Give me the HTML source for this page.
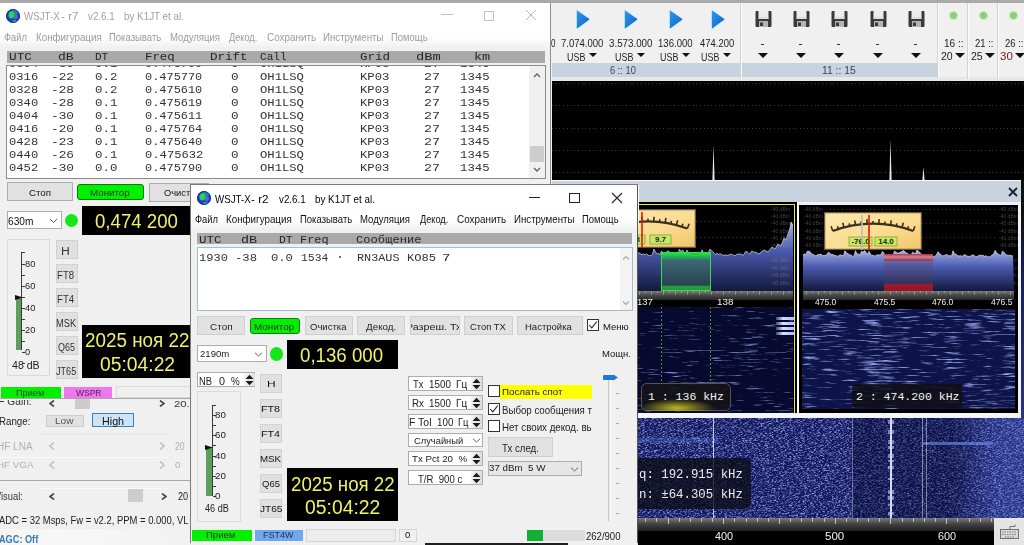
<!DOCTYPE html>
<html><head><meta charset="utf-8"><style>*{box-sizing:border-box;margin:0;padding:0}
html,body{width:1024px;height:545px;overflow:hidden;background:#f0f0f0}
body{font-family:"Liberation Sans",sans-serif;font-size:11px;color:#000}
.a{position:absolute}
.t{position:absolute;white-space:nowrap;line-height:1}
#root{position:relative;width:1024px;height:545px;overflow:hidden;background:#f0f0f0}
.tri{display:inline-block;width:0;height:0;border-left:5px solid transparent;border-right:5px solid transparent;border-top:6px solid #111;vertical-align:middle;margin-left:4px;position:relative;top:-1px}
.btn{position:absolute;background:#e1e1e1;border:1px solid #adadad;text-align:center;color:#000;white-space:nowrap;overflow:hidden}
</style></head><body><div id="root">
<div class="a" style="left:0px;top:0px;width:1024px;height:3px;background:#a9a9a9"></div>
<div class="a" style="left:552px;top:63px;width:188px;height:14px;background:#c7d3df"></div>
<div class="a" style="left:741px;top:63px;width:196px;height:14px;background:#c7d3df"></div>
<div class="a" style="left:552px;top:77px;width:472px;height:4px;background:#e8e8e8"></div>
<div class="a" style="left:740px;top:3px;width:1px;height:76px;background:#d2d2d2"></div>
<div class="a" style="left:741px;top:3px;width:1px;height:76px;background:#fbfbfb"></div>
<div class="a" style="left:937px;top:3px;width:1px;height:76px;background:#d2d2d2"></div>
<div class="a" style="left:938px;top:3px;width:1px;height:76px;background:#fbfbfb"></div>
<div class="a" style="left:967px;top:3px;width:1px;height:76px;background:#d2d2d2"></div>
<div class="a" style="left:968px;top:3px;width:1px;height:76px;background:#fbfbfb"></div>
<div class="a" style="left:997px;top:3px;width:1px;height:76px;background:#d2d2d2"></div>
<div class="a" style="left:998px;top:3px;width:1px;height:76px;background:#fbfbfb"></div>
<div class="t" style="left:610.00px;top:66px;font-size:10.0px;color:#3a4450;transform:scaleX(0.9286);transform-origin:0 0;">6 :: 10</div>
<div class="t" style="left:821.97px;top:66px;font-size:10.0px;color:#3a4450;transform:scaleX(1.0323);transform-origin:0 0;">11 :: 15</div>
<svg class="a" style="left:575px;top:9px" width="16" height="21" viewBox="0 0 16 21"><defs><linearGradient id="pg" x1="0" y1="0" x2="1" y2="1"><stop offset="0" stop-color="#2f9af0"/><stop offset="1" stop-color="#0a62c0"/></linearGradient></defs><path d="M1.5 2Q1.5 0.8 2.6 1.4L14.2 9.6Q15.2 10.3 14.2 11L2.6 19.6Q1.5 20.2 1.5 19z" fill="url(#pg)" stroke="#d8f4ff" stroke-width="0.6"/></svg>
<svg class="a" style="left:623px;top:9px" width="16" height="21" viewBox="0 0 16 21"><defs><linearGradient id="pg" x1="0" y1="0" x2="1" y2="1"><stop offset="0" stop-color="#2f9af0"/><stop offset="1" stop-color="#0a62c0"/></linearGradient></defs><path d="M1.5 2Q1.5 0.8 2.6 1.4L14.2 9.6Q15.2 10.3 14.2 11L2.6 19.6Q1.5 20.2 1.5 19z" fill="url(#pg)" stroke="#d8f4ff" stroke-width="0.6"/></svg>
<svg class="a" style="left:668px;top:9px" width="16" height="21" viewBox="0 0 16 21"><defs><linearGradient id="pg" x1="0" y1="0" x2="1" y2="1"><stop offset="0" stop-color="#2f9af0"/><stop offset="1" stop-color="#0a62c0"/></linearGradient></defs><path d="M1.5 2Q1.5 0.8 2.6 1.4L14.2 9.6Q15.2 10.3 14.2 11L2.6 19.6Q1.5 20.2 1.5 19z" fill="url(#pg)" stroke="#d8f4ff" stroke-width="0.6"/></svg>
<svg class="a" style="left:710px;top:9px" width="16" height="21" viewBox="0 0 16 21"><defs><linearGradient id="pg" x1="0" y1="0" x2="1" y2="1"><stop offset="0" stop-color="#2f9af0"/><stop offset="1" stop-color="#0a62c0"/></linearGradient></defs><path d="M1.5 2Q1.5 0.8 2.6 1.4L14.2 9.6Q15.2 10.3 14.2 11L2.6 19.6Q1.5 20.2 1.5 19z" fill="url(#pg)" stroke="#d8f4ff" stroke-width="0.6"/></svg>
<div class="t" style="left:551.00px;top:39px;font-size:10.0px;color:#1e1e1e;transform:scaleX(0.8000);transform-origin:0 0;">0</div>
<div class="t" style="left:561.05px;top:39px;font-size:10.0px;color:#1e1e1e;transform:scaleX(0.9535);transform-origin:0 0;">7.074.000</div>
<div class="t" style="left:609.02px;top:39px;font-size:10.0px;color:#1e1e1e;transform:scaleX(0.9767);transform-origin:0 0;">3.573.000</div>
<div class="t" style="left:658.04px;top:39px;font-size:10.0px;color:#1e1e1e;transform:scaleX(0.9571);transform-origin:0 0;">136.000</div>
<div class="t" style="left:700.00px;top:39px;font-size:10.0px;color:#1e1e1e;transform:scaleX(0.9444);transform-origin:0 0;">474.200</div>
<div class="t" style="left:567.15px;top:52px;font-size:10.5px;color:#1e1e1e;transform:scaleX(0.8500);transform-origin:0 0;">USB</div>
<div class="a" style="left:588.5px;top:53px;width:0px;height:0px;border-left:4.5px solid transparent;border-right:4.5px solid transparent;border-top:4.5px solid #111"></div>
<div class="t" style="left:615.15px;top:52px;font-size:10.5px;color:#1e1e1e;transform:scaleX(0.8500);transform-origin:0 0;">USB</div>
<div class="a" style="left:636.5px;top:53px;width:0px;height:0px;border-left:4.5px solid transparent;border-right:4.5px solid transparent;border-top:4.5px solid #111"></div>
<div class="t" style="left:660.15px;top:52px;font-size:10.5px;color:#1e1e1e;transform:scaleX(0.8500);transform-origin:0 0;">USB</div>
<div class="a" style="left:681.5px;top:53px;width:0px;height:0px;border-left:4.5px solid transparent;border-right:4.5px solid transparent;border-top:4.5px solid #111"></div>
<div class="t" style="left:701.15px;top:52px;font-size:10.5px;color:#1e1e1e;transform:scaleX(0.8500);transform-origin:0 0;">USB</div>
<div class="a" style="left:722.5px;top:53px;width:0px;height:0px;border-left:4.5px solid transparent;border-right:4.5px solid transparent;border-top:4.5px solid #111"></div>
<svg class="a" style="left:755px;top:10px" width="17" height="17" viewBox="0 0 17 17"><rect x="0.5" y="1" width="16" height="16" rx="1" fill="#3a3a3a"/><rect x="3.5" y="1" width="10" height="8" fill="#ececf2"/><rect x="3.5" y="7" width="10" height="1.5" fill="#d8d8e0"/><rect x="4" y="11" width="9" height="6" fill="#b4b4b4"/><rect x="5" y="12.5" width="3" height="3.5" fill="#3a3a3a"/></svg>
<div class="a" style="left:761px;top:44px;width:3px;height:1px;background:#333"></div>
<div class="a" style="left:758px;top:53px;width:0px;height:0px;border-left:5px solid transparent;border-right:5px solid transparent;border-top:5px solid #111"></div>
<svg class="a" style="left:793px;top:10px" width="17" height="17" viewBox="0 0 17 17"><rect x="0.5" y="1" width="16" height="16" rx="1" fill="#3a3a3a"/><rect x="3.5" y="1" width="10" height="8" fill="#ececf2"/><rect x="3.5" y="7" width="10" height="1.5" fill="#d8d8e0"/><rect x="4" y="11" width="9" height="6" fill="#b4b4b4"/><rect x="5" y="12.5" width="3" height="3.5" fill="#3a3a3a"/></svg>
<div class="a" style="left:799px;top:44px;width:3px;height:1px;background:#333"></div>
<div class="a" style="left:796px;top:53px;width:0px;height:0px;border-left:5px solid transparent;border-right:5px solid transparent;border-top:5px solid #111"></div>
<svg class="a" style="left:831px;top:10px" width="17" height="17" viewBox="0 0 17 17"><rect x="0.5" y="1" width="16" height="16" rx="1" fill="#3a3a3a"/><rect x="3.5" y="1" width="10" height="8" fill="#ececf2"/><rect x="3.5" y="7" width="10" height="1.5" fill="#d8d8e0"/><rect x="4" y="11" width="9" height="6" fill="#b4b4b4"/><rect x="5" y="12.5" width="3" height="3.5" fill="#3a3a3a"/></svg>
<div class="a" style="left:837px;top:44px;width:3px;height:1px;background:#333"></div>
<div class="a" style="left:834px;top:53px;width:0px;height:0px;border-left:5px solid transparent;border-right:5px solid transparent;border-top:5px solid #111"></div>
<svg class="a" style="left:870px;top:10px" width="17" height="17" viewBox="0 0 17 17"><rect x="0.5" y="1" width="16" height="16" rx="1" fill="#3a3a3a"/><rect x="3.5" y="1" width="10" height="8" fill="#ececf2"/><rect x="3.5" y="7" width="10" height="1.5" fill="#d8d8e0"/><rect x="4" y="11" width="9" height="6" fill="#b4b4b4"/><rect x="5" y="12.5" width="3" height="3.5" fill="#3a3a3a"/></svg>
<div class="a" style="left:876px;top:44px;width:3px;height:1px;background:#333"></div>
<div class="a" style="left:873px;top:53px;width:0px;height:0px;border-left:5px solid transparent;border-right:5px solid transparent;border-top:5px solid #111"></div>
<svg class="a" style="left:908px;top:10px" width="17" height="17" viewBox="0 0 17 17"><rect x="0.5" y="1" width="16" height="16" rx="1" fill="#3a3a3a"/><rect x="3.5" y="1" width="10" height="8" fill="#ececf2"/><rect x="3.5" y="7" width="10" height="1.5" fill="#d8d8e0"/><rect x="4" y="11" width="9" height="6" fill="#b4b4b4"/><rect x="5" y="12.5" width="3" height="3.5" fill="#3a3a3a"/></svg>
<div class="a" style="left:914px;top:44px;width:3px;height:1px;background:#333"></div>
<div class="a" style="left:911px;top:53px;width:0px;height:0px;border-left:5px solid transparent;border-right:5px solid transparent;border-top:5px solid #111"></div>
<div class="a" style="left:949px;top:11px;width:9px;height:9px;border-radius:50%;background:#8fcf70;border:1px solid #c9e8b8"></div>
<div class="t" style="left:944.00px;top:39px;font-size:10.0px;color:#222;transform:scaleX(1.0010);transform-origin:0 0;">16 ::</div>
<div class="t" style="left:941.00px;top:51px;font-size:10.5px;color:#222;transform:scaleX(1.0010);transform-origin:0 0;">20</div>
<div class="a" style="left:955px;top:53px;width:0px;height:0px;border-left:5px solid transparent;border-right:5px solid transparent;border-top:5px solid #111"></div>
<div class="a" style="left:979px;top:11px;width:9px;height:9px;border-radius:50%;background:#8fcf70;border:1px solid #c9e8b8"></div>
<div class="t" style="left:975.00px;top:39px;font-size:10.0px;color:#222;transform:scaleX(0.9474);transform-origin:0 0;">21 ::</div>
<div class="t" style="left:971.00px;top:51px;font-size:10.5px;color:#222;transform:scaleX(1.0010);transform-origin:0 0;">25</div>
<div class="a" style="left:985px;top:53px;width:0px;height:0px;border-left:5px solid transparent;border-right:5px solid transparent;border-top:5px solid #111"></div>
<div class="a" style="left:1009px;top:11px;width:9px;height:9px;border-radius:50%;background:#8fcf70;border:1px solid #c9e8b8"></div>
<div class="t" style="left:1005.00px;top:39px;font-size:10.0px;color:#222;transform:scaleX(0.9474);transform-origin:0 0;">26 ::</div>
<div class="t" style="left:999.90px;top:51px;font-size:10.5px;color:#7a2020;transform:scaleX(1.1000);transform-origin:0 0;">30</div>
<div class="a" style="left:1015px;top:53px;width:0px;height:0px;border-left:5px solid transparent;border-right:5px solid transparent;border-top:5px solid #111"></div>
<div class="a" style="left:552px;top:81px;width:472px;height:99px;background:#000"></div>
<div class="a" style="left:552px;top:83px;width:472px;height:1px;background:repeating-linear-gradient(90deg,#3a3a3a 0 1px,transparent 1px 3.7px)"></div>
<div class="a" style="left:552px;top:105px;width:472px;height:1px;background:repeating-linear-gradient(90deg,#3a3a3a 0 1px,transparent 1px 3.7px)"></div>
<div class="a" style="left:552px;top:128px;width:472px;height:1px;background:repeating-linear-gradient(90deg,#3a3a3a 0 1px,transparent 1px 3.7px)"></div>
<div class="a" style="left:552px;top:150px;width:472px;height:1px;background:repeating-linear-gradient(90deg,#3a3a3a 0 1px,transparent 1px 3.7px)"></div>
<div class="a" style="left:552px;top:172px;width:472px;height:1px;background:repeating-linear-gradient(90deg,#3a3a3a 0 1px,transparent 1px 3.7px)"></div>
<svg class="a" style="left:711px;top:144px" width="5" height="36"><path d="M2.5 0L3.6 36H1.4z" fill="#e8e8e8"/></svg>
<svg class="a" style="left:888px;top:139px" width="5" height="41"><path d="M2.5 0L3.6 41H1.4z" fill="#e8e8e8"/></svg>
<svg class="a" style="left:921px;top:167px" width="5" height="13"><path d="M2.5 0L3.6 13H1.4z" fill="#e8e8e8"/></svg>
<svg class="a" style="left:552px;top:180px" width="472" height="338"><defs><filter id="wn" x="0" y="0" width="100%" height="100%"><feTurbulence type="fractalNoise" baseFrequency="0.45 1.4" numOctaves="3" seed="3"/><feColorMatrix values="0 0 0 0 0.3  0 0 0 0 0.37  0 0 0 0 0.86  2.4 0 0 0 -1.02"/></filter><linearGradient id="wgx" x1="0" y1="0" x2="1" y2="0"><stop offset="0" stop-color="#050830" stop-opacity="0"/><stop offset="0.63" stop-color="#050830" stop-opacity="0"/><stop offset="0.64" stop-color="#050830" stop-opacity="0.4"/><stop offset="0.86" stop-color="#050830" stop-opacity="0.4"/><stop offset="0.93" stop-color="#050830" stop-opacity="0"/><stop offset="1" stop-color="#050830" stop-opacity="0"/></linearGradient><linearGradient id="wgr" x1="0" y1="0" x2="1" y2="0"><stop offset="0.84" stop-color="#5a74e0" stop-opacity="0"/><stop offset="0.95" stop-color="#5a74e0" stop-opacity="0.3"/><stop offset="1" stop-color="#5a74e0" stop-opacity="0.35"/></linearGradient></defs><rect width="472" height="338" fill="#10175a"/><rect width="472" height="338" filter="url(#wn)"/><rect width="472" height="338" fill="url(#wgx)"/><rect width="472" height="338" fill="url(#wgr)"/><rect x="86" y="258" width="80" height="5" fill="#6080e0" opacity="0.3"/><rect x="371" y="262" width="70" height="3" fill="#7a98f8" opacity="0.55"/></svg>
<div class="a" style="left:713px;top:180px;width:1px;height:338px;background:rgba(235,240,255,0.8)"></div>
<div class="a" style="left:852px;top:180px;width:1px;height:338px;background:rgba(235,240,255,0.35)"></div>
<div class="a" style="left:890px;top:180px;width:2px;height:338px;background:rgba(235,240,255,0.9)"></div>
<div class="a" style="left:922px;top:180px;width:1px;height:338px;background:rgba(235,240,255,0.5)"></div>
<div class="a" style="left:926px;top:180px;width:1px;height:338px;background:rgba(235,240,255,0.45)"></div>
<div class="a" style="left:888px;top:420px;width:6px;height:4px;background:rgba(200,215,255,0.55)"></div>
<div class="a" style="left:888px;top:430px;width:6px;height:4px;background:rgba(200,215,255,0.55)"></div>
<div class="a" style="left:888px;top:440px;width:6px;height:4px;background:rgba(200,215,255,0.55)"></div>
<div class="a" style="left:888px;top:446px;width:6px;height:3px;background:rgba(200,215,255,0.55)"></div>
<div class="a" style="left:888px;top:454px;width:6px;height:4px;background:rgba(200,215,255,0.55)"></div>
<div class="a" style="left:888px;top:460px;width:6px;height:2px;background:rgba(200,215,255,0.55)"></div>
<div class="a" style="left:888px;top:466px;width:6px;height:3px;background:rgba(200,215,255,0.55)"></div>
<div class="a" style="left:888px;top:478px;width:6px;height:2px;background:rgba(200,215,255,0.55)"></div>
<div class="a" style="left:888px;top:490px;width:6px;height:4px;background:rgba(200,215,255,0.55)"></div>
<div class="a" style="left:888px;top:496px;width:6px;height:4px;background:rgba(200,215,255,0.55)"></div>
<div class="a" style="left:888px;top:504px;width:6px;height:2px;background:rgba(200,215,255,0.55)"></div>
<div class="a" style="left:888px;top:512px;width:6px;height:3px;background:rgba(200,215,255,0.55)"></div>
<div class="a" style="left:552px;top:518px;width:442px;height:13px;background:linear-gradient(#7a7a7a,#3e3e3e 50%,#222)"></div>
<div class="a" style="left:556px;top:518px;width:1px;height:6px;background:#bdbdbd"></div>
<div class="a" style="left:567px;top:518px;width:1px;height:4px;background:#bdbdbd"></div>
<div class="a" style="left:578px;top:518px;width:1px;height:4px;background:#bdbdbd"></div>
<div class="a" style="left:589px;top:518px;width:1px;height:4px;background:#bdbdbd"></div>
<div class="a" style="left:601px;top:518px;width:1px;height:4px;background:#bdbdbd"></div>
<div class="a" style="left:612px;top:518px;width:1px;height:6px;background:#bdbdbd"></div>
<div class="a" style="left:623px;top:518px;width:1px;height:4px;background:#bdbdbd"></div>
<div class="a" style="left:634px;top:518px;width:1px;height:4px;background:#bdbdbd"></div>
<div class="a" style="left:645px;top:518px;width:1px;height:4px;background:#bdbdbd"></div>
<div class="a" style="left:656px;top:518px;width:1px;height:4px;background:#bdbdbd"></div>
<div class="a" style="left:668px;top:518px;width:1px;height:6px;background:#bdbdbd"></div>
<div class="a" style="left:679px;top:518px;width:1px;height:4px;background:#bdbdbd"></div>
<div class="a" style="left:690px;top:518px;width:1px;height:4px;background:#bdbdbd"></div>
<div class="a" style="left:701px;top:518px;width:1px;height:4px;background:#bdbdbd"></div>
<div class="a" style="left:712px;top:518px;width:1px;height:4px;background:#bdbdbd"></div>
<div class="a" style="left:723px;top:518px;width:1px;height:6px;background:#bdbdbd"></div>
<div class="a" style="left:734px;top:518px;width:1px;height:4px;background:#bdbdbd"></div>
<div class="a" style="left:746px;top:518px;width:1px;height:4px;background:#bdbdbd"></div>
<div class="a" style="left:757px;top:518px;width:1px;height:4px;background:#bdbdbd"></div>
<div class="a" style="left:768px;top:518px;width:1px;height:4px;background:#bdbdbd"></div>
<div class="a" style="left:779px;top:518px;width:1px;height:6px;background:#bdbdbd"></div>
<div class="a" style="left:790px;top:518px;width:1px;height:4px;background:#bdbdbd"></div>
<div class="a" style="left:801px;top:518px;width:1px;height:4px;background:#bdbdbd"></div>
<div class="a" style="left:812px;top:518px;width:1px;height:4px;background:#bdbdbd"></div>
<div class="a" style="left:824px;top:518px;width:1px;height:4px;background:#bdbdbd"></div>
<div class="a" style="left:835px;top:518px;width:1px;height:6px;background:#bdbdbd"></div>
<div class="a" style="left:846px;top:518px;width:1px;height:4px;background:#bdbdbd"></div>
<div class="a" style="left:857px;top:518px;width:1px;height:4px;background:#bdbdbd"></div>
<div class="a" style="left:868px;top:518px;width:1px;height:4px;background:#bdbdbd"></div>
<div class="a" style="left:879px;top:518px;width:1px;height:4px;background:#bdbdbd"></div>
<div class="a" style="left:890px;top:518px;width:1px;height:6px;background:#bdbdbd"></div>
<div class="a" style="left:902px;top:518px;width:1px;height:4px;background:#bdbdbd"></div>
<div class="a" style="left:913px;top:518px;width:1px;height:4px;background:#bdbdbd"></div>
<div class="a" style="left:924px;top:518px;width:1px;height:4px;background:#bdbdbd"></div>
<div class="a" style="left:935px;top:518px;width:1px;height:4px;background:#bdbdbd"></div>
<div class="a" style="left:946px;top:518px;width:1px;height:6px;background:#bdbdbd"></div>
<div class="a" style="left:957px;top:518px;width:1px;height:4px;background:#bdbdbd"></div>
<div class="a" style="left:969px;top:518px;width:1px;height:4px;background:#bdbdbd"></div>
<div class="a" style="left:980px;top:518px;width:1px;height:4px;background:#bdbdbd"></div>
<div class="a" style="left:991px;top:518px;width:1px;height:4px;background:#bdbdbd"></div>
<div class="a" style="left:552px;top:531px;width:442px;height:14px;background:#000"></div>
<div class="t" style="left:715.00px;top:532px;font-size:10.0px;color:#f0f0f0;transform:scaleX(1.0882);transform-origin:0 0;">400</div>
<div class="t" style="left:825.34px;top:532px;font-size:10.0px;color:#f0f0f0;transform:scaleX(1.1562);transform-origin:0 0;">500</div>
<div class="t" style="left:937.50px;top:532px;font-size:10.0px;color:#f0f0f0;transform:scaleX(1.0882);transform-origin:0 0;">600</div>
<div class="a" style="left:994px;top:518px;width:30px;height:27px;background:#e4e4e4"></div>
<svg class="a" style="left:1000px;top:524px" width="19" height="15"><rect x="0.5" y="5.5" width="18" height="9" fill="#d8d8d8" stroke="#707070"/><path d="M2 8h15M2 10.5h15M5 13h9" stroke="#808080" stroke-width="1" stroke-dasharray="1.5 1"/><path d="M10 5V2.5h5V0.5" stroke="#707070" fill="none"/></svg>
<div class="a" style="left:600px;top:458px;width:151px;height:51px;background:rgba(10,12,22,0.78);border-radius:6px"></div>
<div class="t" style="left:638.58px;top:468px;font-size:13.5px;color:#ececec;font-family:'Liberation Mono';transform:scaleX(0.9161);transform-origin:0 0;">q: 192.915 kHz</div>
<div class="t" style="left:638.58px;top:488px;font-size:13.5px;color:#ececec;font-family:'Liberation Mono';transform:scaleX(0.9161);transform-origin:0 0;">n: &plusmn;64.305 kHz</div>
<div class="a" style="left:0px;top:398px;width:190px;height:147px;background:#f0f0f0"></div>
<div class="a" style="left:0;top:400px;width:190px;height:20px;overflow:hidden"><div class="t" style="left:-8.92px;top:-4px;font-size:11.0px;color:#333;transform:scaleX(0.9238);transform-origin:0 0;">HF Gain:</div>
</div>
<svg class="a" style="left:48.5px;top:399.5px" width="6" height="7"><path d="M5 0.5L1 3.5L5 6.5" stroke="#444" stroke-width="1.6" fill="none"/></svg>
<div class="a" style="left:75px;top:398px;width:15px;height:11px;background:#cccccc"></div>
<svg class="a" style="left:159px;top:399.5px" width="6" height="7"><path d="M1 0.5L5 3.5L1 6.5" stroke="#444" stroke-width="1.6" fill="none"/></svg>
<div class="t" style="left:174.40px;top:400px;font-size:9.0px;color:#333;transform:scaleX(1.2571);transform-origin:0 0;">20.:</div>
<div class="t" style="left:-0.89px;top:416px;font-size:11.0px;color:#222;transform:scaleX(0.8853);transform-origin:0 0;">Range:</div>
<div class="a" style="left:46px;top:415px;width:38px;height:12px;background:#e1e1e1;border:1px solid #cdcdcd"></div>
<div class="t" style="left:55.44px;top:416px;font-size:9.5px;color:#555;transform:scaleX(1.0563);transform-origin:0 0;">Low</div>
<div class="a" style="left:92px;top:413px;width:42px;height:14px;background:#cce4f7;border:1px solid #3c7fb1"></div>
<div class="t" style="left:101.52px;top:416px;font-size:11.0px;color:#111;transform:scaleX(0.9762);transform-origin:0 0;">High</div>
<div class="a" style="left:40px;top:434px;width:128px;height:1px;background:#e6e6e6"></div>
<div class="t" style="left:-3.00px;top:442px;font-size:10.0px;color:#b0b0b0;transform:scaleX(1.0010);transform-origin:0 0;">HF LNA</div>
<svg class="a" style="left:48.5px;top:441.5px" width="6" height="8"><path d="M5 0.5L1 4.0L5 7.5" stroke="#c0c0c0" stroke-width="1.6" fill="none"/></svg>
<svg class="a" style="left:159px;top:441.5px" width="6" height="8"><path d="M1 0.5L5 4.0L1 7.5" stroke="#c0c0c0" stroke-width="1.6" fill="none"/></svg>
<div class="t" style="left:175.20px;top:442px;font-size:10.0px;color:#b0b0b0;transform:scaleX(0.8636);transform-origin:0 0;">20</div>
<div class="a" style="left:0px;top:457px;width:168px;height:1px;background:#fafafa"></div>
<div class="t" style="left:-3.03px;top:460px;font-size:9.5px;color:#b0b0b0;transform:scaleX(1.0294);transform-origin:0 0;">HF VGA</div>
<svg class="a" style="left:48.5px;top:461px" width="6" height="8"><path d="M5 0.5L1 4.0L5 7.5" stroke="#c0c0c0" stroke-width="1.6" fill="none"/></svg>
<svg class="a" style="left:159px;top:461px" width="6" height="8"><path d="M1 0.5L5 4.0L1 7.5" stroke="#c0c0c0" stroke-width="1.6" fill="none"/></svg>
<div class="t" style="left:175.20px;top:460px;font-size:9.5px;color:#b0b0b0;transform:scaleX(1.0200);transform-origin:0 0;">0</div>
<div class="a" style="left:0px;top:480px;width:190px;height:1px;background:#a8a8a8"></div>
<div class="a" style="left:40px;top:488px;width:128px;height:1px;background:#fafafa"></div>
<div class="t" style="left:-5.00px;top:491px;font-size:10.5px;color:#333;transform:scaleX(0.8871);transform-origin:0 0;">Visual:</div>
<svg class="a" style="left:48.5px;top:493px" width="6" height="7"><path d="M5 0.5L1 3.5L5 6.5" stroke="#444" stroke-width="1.6" fill="none"/></svg>
<div class="a" style="left:128px;top:489px;width:15px;height:13px;background:#cdcdcd"></div>
<svg class="a" style="left:161px;top:493px" width="6" height="7"><path d="M1 0.5L5 3.5L1 6.5" stroke="#444" stroke-width="1.6" fill="none"/></svg>
<div class="t" style="left:178.00px;top:492px;font-size:10.0px;color:#222;transform:scaleX(0.9091);transform-origin:0 0;">20</div>
<div class="t" style="left:-1.50px;top:515px;font-size:11.5px;color:#222;transform:scaleX(0.8203);transform-origin:0 0;">ADC = 32 Msps, Fw = v2.2, PPM = 0.000, VL</div>
<div class="a" style="left:0px;top:529px;width:190px;height:16px;background:linear-gradient(90deg,#f8f4ef,#f7f7f7 30%,#f2f2f2)"></div>
<div class="t" style="left:-1.00px;top:534px;font-size:10.5px;color:#2f7cbe;font-weight:bold;transform:scaleX(0.8733);transform-origin:0 0;">AGC: Off</div>
<div class="a" style="left:0px;top:3px;width:551px;height:395px;background:#f0f0f0"></div>
<div class="a" style="left:0px;top:3px;width:551px;height:27px;background:#fff"></div>
<div class="a" style="left:0px;top:30px;width:551px;height:17px;background:linear-gradient(#fff,#fdfdfd 55%,#f1f1f1)"></div>
<svg class="a" style="left:6px;top:9px" width="14" height="14" viewBox="0 0 14 14"><circle cx="7" cy="7" r="6.8" fill="#1c3cc8"/><ellipse cx="8" cy="3.5" rx="4" ry="2.5" fill="#2a8aa0" opacity="0.9"/><ellipse cx="5.5" cy="6" rx="3" ry="3.4" fill="#28d848"/><ellipse cx="9.8" cy="7.8" rx="2.2" ry="2.4" fill="#6a6af0" opacity="0.8"/><ellipse cx="8.5" cy="12" rx="2.5" ry="1.3" fill="#38b848" opacity="0.8"/><circle cx="7" cy="7" r="6.6" fill="none" stroke="#1020a0" stroke-width="0.8"/></svg>
<div class="t" style="left:24.00px;top:11px;font-size:11.5px;color:#a0a0a0;transform:scaleX(0.8452);transform-origin:0 0;">WSJT-X</div>
<div class="t" style="left:60.98px;top:11px;font-size:11.5px;color:#a0a0a0;transform:scaleX(1.0187);transform-origin:0 0;">- r7</div>
<div class="t" style="left:88.30px;top:11px;font-size:11.5px;color:#a0a0a0;transform:scaleX(0.8516);transform-origin:0 0;">v2.6.1</div>
<div class="t" style="left:124.35px;top:11px;font-size:11.5px;color:#a0a0a0;transform:scaleX(0.8544);transform-origin:0 0;">by K1JT et al.</div>
<div class="t" style="left:4.15px;top:32px;font-size:11.0px;color:#9c9c9c;transform:scaleX(0.8462);transform-origin:0 0;">Файл</div>
<div class="t" style="left:35.61px;top:32px;font-size:11.0px;color:#9c9c9c;transform:scaleX(0.8903);transform-origin:0 0;">Конфигурация</div>
<div class="t" style="left:109.14px;top:32px;font-size:11.0px;color:#9c9c9c;transform:scaleX(0.8644);transform-origin:0 0;">Показывать</div>
<div class="t" style="left:169.63px;top:32px;font-size:11.0px;color:#9c9c9c;transform:scaleX(0.8661);transform-origin:0 0;">Модуляция</div>
<div class="t" style="left:229.00px;top:32px;font-size:11.0px;color:#9c9c9c;transform:scaleX(0.8333);transform-origin:0 0;">Декод.</div>
<div class="t" style="left:266.70px;top:32px;font-size:11.0px;color:#9c9c9c;transform:scaleX(0.8981);transform-origin:0 0;">Сохранить</div>
<div class="t" style="left:323.12px;top:32px;font-size:11.0px;color:#9c9c9c;transform:scaleX(0.8806);transform-origin:0 0;">Инструменты</div>
<div class="t" style="left:391.44px;top:32px;font-size:11.0px;color:#9c9c9c;transform:scaleX(0.8610);transform-origin:0 0;">Помощь</div>
<div class="a" style="left:550px;top:3px;width:1px;height:395px;background:#8f8f8f"></div>
<div class="a" style="left:441px;top:14px;width:12px;height:1px;background:#c0c0c0"></div>
<div class="a" style="left:484px;top:11px;width:10px;height:10px;border:1px solid #c0c0c0"></div>
<svg class="a" style="left:525px;top:9px" width="12" height="12"><path d="M1 1L11 11M11 1L1 11" stroke="#b8b8b8" stroke-width="1"/></svg>
<div class="a" style="left:7px;top:51px;width:538px;height:12px;background:#a9a9a9"></div>
<div class="t" style="left:8.59px;top:51px;font-size:11.5px;color:#262626;font-family:'Liberation Mono';transform:scaleX(1.1105);transform-origin:0 0;">UTC</div>
<div class="t" style="left:58.37px;top:51px;font-size:11.5px;color:#262626;font-family:'Liberation Mono';transform:scaleX(1.1308);transform-origin:0 0;">dB</div>
<div class="t" style="left:95.45px;top:51px;font-size:11.5px;color:#262626;font-family:'Liberation Mono';transform:scaleX(0.9538);transform-origin:0 0;">DT</div>
<div class="t" style="left:145.12px;top:51px;font-size:11.5px;color:#262626;font-family:'Liberation Mono';transform:scaleX(1.0769);transform-origin:0 0;">Freq</div>
<div class="t" style="left:210.01px;top:51px;font-size:11.5px;color:#262626;font-family:'Liberation Mono';transform:scaleX(1.0906);transform-origin:0 0;">Drift</div>
<div class="t" style="left:260.04px;top:51px;font-size:11.5px;color:#262626;font-family:'Liberation Mono';transform:scaleX(0.9615);transform-origin:0 0;">Call</div>
<div class="t" style="left:359.61px;top:51px;font-size:11.5px;color:#262626;font-family:'Liberation Mono';transform:scaleX(1.0885);transform-origin:0 0;">Grid</div>
<div class="t" style="left:416.11px;top:51px;font-size:11.5px;color:#262626;font-family:'Liberation Mono';transform:scaleX(1.1947);transform-origin:0 0;">dBm</div>
<div class="t" style="left:474.22px;top:51px;font-size:11.5px;color:#262626;font-family:'Liberation Mono';transform:scaleX(1.1750);transform-origin:0 0;">km</div>
<div class="a" style="left:6px;top:65px;width:540px;height:114px;background:#fff;border:1px solid #8a8a8a"></div>
<div class="a" style="left:0;top:66px;width:529px;height:112px;overflow:hidden"><div class="t" style="left:9.24px;top:-8px;font-size:11.5px;color:#333;font-family:'Liberation Mono';transform:scaleX(1.0577);transform-origin:0 0;">0304</div>
<div class="t" style="left:50.78px;top:-8px;font-size:11.5px;color:#333;font-family:'Liberation Mono';transform:scaleX(1.1111);transform-origin:0 0;">-30</div>
<div class="t" style="left:94.82px;top:-8px;font-size:11.5px;color:#333;font-family:'Liberation Mono';transform:scaleX(1.0789);transform-origin:0 0;">0.1</div>
<div class="t" style="left:145.16px;top:-8px;font-size:11.5px;color:#333;font-family:'Liberation Mono';transform:scaleX(1.0370);transform-origin:0 0;">0.475700</div>
<div class="t" style="left:231.20px;top:-8px;font-size:11.5px;color:#333;font-family:'Liberation Mono';transform:scaleX(1.1000);transform-origin:0 0;">0</div>
<div class="t" style="left:259.94px;top:-8px;font-size:11.5px;color:#333;font-family:'Liberation Mono';transform:scaleX(1.0600);transform-origin:0 0;">OH1LSQ</div>
<div class="t" style="left:359.63px;top:-8px;font-size:11.5px;color:#333;font-family:'Liberation Mono';transform:scaleX(1.0654);transform-origin:0 0;">KP03</div>
<div class="t" style="left:424.04px;top:-8px;font-size:11.5px;color:#333;font-family:'Liberation Mono';transform:scaleX(1.1583);transform-origin:0 0;">27</div>
<div class="t" style="left:460.13px;top:-8px;font-size:11.5px;color:#333;font-family:'Liberation Mono';transform:scaleX(1.0692);transform-origin:0 0;">1345</div>
<div class="t" style="left:9.24px;top:5px;font-size:11.5px;color:#333;font-family:'Liberation Mono';transform:scaleX(1.0577);transform-origin:0 0;">0316</div>
<div class="t" style="left:50.78px;top:5px;font-size:11.5px;color:#333;font-family:'Liberation Mono';transform:scaleX(1.1111);transform-origin:0 0;">-22</div>
<div class="t" style="left:94.82px;top:5px;font-size:11.5px;color:#333;font-family:'Liberation Mono';transform:scaleX(1.0789);transform-origin:0 0;">0.2</div>
<div class="t" style="left:145.16px;top:5px;font-size:11.5px;color:#333;font-family:'Liberation Mono';transform:scaleX(1.0370);transform-origin:0 0;">0.475770</div>
<div class="t" style="left:231.20px;top:5px;font-size:11.5px;color:#333;font-family:'Liberation Mono';transform:scaleX(1.1000);transform-origin:0 0;">0</div>
<div class="t" style="left:259.94px;top:5px;font-size:11.5px;color:#333;font-family:'Liberation Mono';transform:scaleX(1.0600);transform-origin:0 0;">OH1LSQ</div>
<div class="t" style="left:359.63px;top:5px;font-size:11.5px;color:#333;font-family:'Liberation Mono';transform:scaleX(1.0654);transform-origin:0 0;">KP03</div>
<div class="t" style="left:424.04px;top:5px;font-size:11.5px;color:#333;font-family:'Liberation Mono';transform:scaleX(1.1583);transform-origin:0 0;">27</div>
<div class="t" style="left:460.13px;top:5px;font-size:11.5px;color:#333;font-family:'Liberation Mono';transform:scaleX(1.0692);transform-origin:0 0;">1345</div>
<div class="t" style="left:9.24px;top:18px;font-size:11.5px;color:#333;font-family:'Liberation Mono';transform:scaleX(1.0577);transform-origin:0 0;">0328</div>
<div class="t" style="left:50.78px;top:18px;font-size:11.5px;color:#333;font-family:'Liberation Mono';transform:scaleX(1.1111);transform-origin:0 0;">-28</div>
<div class="t" style="left:94.82px;top:18px;font-size:11.5px;color:#333;font-family:'Liberation Mono';transform:scaleX(1.0789);transform-origin:0 0;">0.2</div>
<div class="t" style="left:145.16px;top:18px;font-size:11.5px;color:#333;font-family:'Liberation Mono';transform:scaleX(1.0370);transform-origin:0 0;">0.475610</div>
<div class="t" style="left:231.20px;top:18px;font-size:11.5px;color:#333;font-family:'Liberation Mono';transform:scaleX(1.1000);transform-origin:0 0;">0</div>
<div class="t" style="left:259.94px;top:18px;font-size:11.5px;color:#333;font-family:'Liberation Mono';transform:scaleX(1.0600);transform-origin:0 0;">OH1LSQ</div>
<div class="t" style="left:359.63px;top:18px;font-size:11.5px;color:#333;font-family:'Liberation Mono';transform:scaleX(1.0654);transform-origin:0 0;">KP03</div>
<div class="t" style="left:424.04px;top:18px;font-size:11.5px;color:#333;font-family:'Liberation Mono';transform:scaleX(1.1583);transform-origin:0 0;">27</div>
<div class="t" style="left:460.13px;top:18px;font-size:11.5px;color:#333;font-family:'Liberation Mono';transform:scaleX(1.0692);transform-origin:0 0;">1345</div>
<div class="t" style="left:9.24px;top:31px;font-size:11.5px;color:#333;font-family:'Liberation Mono';transform:scaleX(1.0577);transform-origin:0 0;">0340</div>
<div class="t" style="left:50.78px;top:31px;font-size:11.5px;color:#333;font-family:'Liberation Mono';transform:scaleX(1.1111);transform-origin:0 0;">-28</div>
<div class="t" style="left:94.82px;top:31px;font-size:11.5px;color:#333;font-family:'Liberation Mono';transform:scaleX(1.0789);transform-origin:0 0;">0.1</div>
<div class="t" style="left:145.16px;top:31px;font-size:11.5px;color:#333;font-family:'Liberation Mono';transform:scaleX(1.0370);transform-origin:0 0;">0.475619</div>
<div class="t" style="left:231.20px;top:31px;font-size:11.5px;color:#333;font-family:'Liberation Mono';transform:scaleX(1.1000);transform-origin:0 0;">0</div>
<div class="t" style="left:259.94px;top:31px;font-size:11.5px;color:#333;font-family:'Liberation Mono';transform:scaleX(1.0600);transform-origin:0 0;">OH1LSQ</div>
<div class="t" style="left:359.63px;top:31px;font-size:11.5px;color:#333;font-family:'Liberation Mono';transform:scaleX(1.0654);transform-origin:0 0;">KP03</div>
<div class="t" style="left:424.04px;top:31px;font-size:11.5px;color:#333;font-family:'Liberation Mono';transform:scaleX(1.1583);transform-origin:0 0;">27</div>
<div class="t" style="left:460.13px;top:31px;font-size:11.5px;color:#333;font-family:'Liberation Mono';transform:scaleX(1.0692);transform-origin:0 0;">1345</div>
<div class="t" style="left:9.24px;top:44px;font-size:11.5px;color:#333;font-family:'Liberation Mono';transform:scaleX(1.0577);transform-origin:0 0;">0404</div>
<div class="t" style="left:50.78px;top:44px;font-size:11.5px;color:#333;font-family:'Liberation Mono';transform:scaleX(1.1111);transform-origin:0 0;">-30</div>
<div class="t" style="left:94.82px;top:44px;font-size:11.5px;color:#333;font-family:'Liberation Mono';transform:scaleX(1.0789);transform-origin:0 0;">0.1</div>
<div class="t" style="left:145.16px;top:44px;font-size:11.5px;color:#333;font-family:'Liberation Mono';transform:scaleX(1.0370);transform-origin:0 0;">0.475611</div>
<div class="t" style="left:231.20px;top:44px;font-size:11.5px;color:#333;font-family:'Liberation Mono';transform:scaleX(1.1000);transform-origin:0 0;">0</div>
<div class="t" style="left:259.94px;top:44px;font-size:11.5px;color:#333;font-family:'Liberation Mono';transform:scaleX(1.0600);transform-origin:0 0;">OH1LSQ</div>
<div class="t" style="left:359.63px;top:44px;font-size:11.5px;color:#333;font-family:'Liberation Mono';transform:scaleX(1.0654);transform-origin:0 0;">KP03</div>
<div class="t" style="left:424.04px;top:44px;font-size:11.5px;color:#333;font-family:'Liberation Mono';transform:scaleX(1.1583);transform-origin:0 0;">27</div>
<div class="t" style="left:460.13px;top:44px;font-size:11.5px;color:#333;font-family:'Liberation Mono';transform:scaleX(1.0692);transform-origin:0 0;">1345</div>
<div class="t" style="left:9.24px;top:57px;font-size:11.5px;color:#333;font-family:'Liberation Mono';transform:scaleX(1.0577);transform-origin:0 0;">0416</div>
<div class="t" style="left:50.78px;top:57px;font-size:11.5px;color:#333;font-family:'Liberation Mono';transform:scaleX(1.1111);transform-origin:0 0;">-20</div>
<div class="t" style="left:94.82px;top:57px;font-size:11.5px;color:#333;font-family:'Liberation Mono';transform:scaleX(1.0789);transform-origin:0 0;">0.1</div>
<div class="t" style="left:145.16px;top:57px;font-size:11.5px;color:#333;font-family:'Liberation Mono';transform:scaleX(1.0370);transform-origin:0 0;">0.475764</div>
<div class="t" style="left:231.20px;top:57px;font-size:11.5px;color:#333;font-family:'Liberation Mono';transform:scaleX(1.1000);transform-origin:0 0;">0</div>
<div class="t" style="left:259.94px;top:57px;font-size:11.5px;color:#333;font-family:'Liberation Mono';transform:scaleX(1.0600);transform-origin:0 0;">OH1LSQ</div>
<div class="t" style="left:359.63px;top:57px;font-size:11.5px;color:#333;font-family:'Liberation Mono';transform:scaleX(1.0654);transform-origin:0 0;">KP03</div>
<div class="t" style="left:424.04px;top:57px;font-size:11.5px;color:#333;font-family:'Liberation Mono';transform:scaleX(1.1583);transform-origin:0 0;">27</div>
<div class="t" style="left:460.13px;top:57px;font-size:11.5px;color:#333;font-family:'Liberation Mono';transform:scaleX(1.0692);transform-origin:0 0;">1345</div>
<div class="t" style="left:9.24px;top:70px;font-size:11.5px;color:#333;font-family:'Liberation Mono';transform:scaleX(1.0577);transform-origin:0 0;">0428</div>
<div class="t" style="left:50.78px;top:70px;font-size:11.5px;color:#333;font-family:'Liberation Mono';transform:scaleX(1.1111);transform-origin:0 0;">-23</div>
<div class="t" style="left:94.82px;top:70px;font-size:11.5px;color:#333;font-family:'Liberation Mono';transform:scaleX(1.0789);transform-origin:0 0;">0.1</div>
<div class="t" style="left:145.16px;top:70px;font-size:11.5px;color:#333;font-family:'Liberation Mono';transform:scaleX(1.0370);transform-origin:0 0;">0.475640</div>
<div class="t" style="left:231.20px;top:70px;font-size:11.5px;color:#333;font-family:'Liberation Mono';transform:scaleX(1.1000);transform-origin:0 0;">0</div>
<div class="t" style="left:259.94px;top:70px;font-size:11.5px;color:#333;font-family:'Liberation Mono';transform:scaleX(1.0600);transform-origin:0 0;">OH1LSQ</div>
<div class="t" style="left:359.63px;top:70px;font-size:11.5px;color:#333;font-family:'Liberation Mono';transform:scaleX(1.0654);transform-origin:0 0;">KP03</div>
<div class="t" style="left:424.04px;top:70px;font-size:11.5px;color:#333;font-family:'Liberation Mono';transform:scaleX(1.1583);transform-origin:0 0;">27</div>
<div class="t" style="left:460.13px;top:70px;font-size:11.5px;color:#333;font-family:'Liberation Mono';transform:scaleX(1.0692);transform-origin:0 0;">1345</div>
<div class="t" style="left:9.24px;top:83px;font-size:11.5px;color:#333;font-family:'Liberation Mono';transform:scaleX(1.0577);transform-origin:0 0;">0440</div>
<div class="t" style="left:50.78px;top:83px;font-size:11.5px;color:#333;font-family:'Liberation Mono';transform:scaleX(1.1111);transform-origin:0 0;">-26</div>
<div class="t" style="left:94.82px;top:83px;font-size:11.5px;color:#333;font-family:'Liberation Mono';transform:scaleX(1.0789);transform-origin:0 0;">0.1</div>
<div class="t" style="left:145.14px;top:83px;font-size:11.5px;color:#333;font-family:'Liberation Mono';transform:scaleX(1.0566);transform-origin:0 0;">0.475632</div>
<div class="t" style="left:231.20px;top:83px;font-size:11.5px;color:#333;font-family:'Liberation Mono';transform:scaleX(1.1000);transform-origin:0 0;">0</div>
<div class="t" style="left:259.94px;top:83px;font-size:11.5px;color:#333;font-family:'Liberation Mono';transform:scaleX(1.0600);transform-origin:0 0;">OH1LSQ</div>
<div class="t" style="left:359.63px;top:83px;font-size:11.5px;color:#333;font-family:'Liberation Mono';transform:scaleX(1.0654);transform-origin:0 0;">KP03</div>
<div class="t" style="left:424.04px;top:83px;font-size:11.5px;color:#333;font-family:'Liberation Mono';transform:scaleX(1.1583);transform-origin:0 0;">27</div>
<div class="t" style="left:460.13px;top:83px;font-size:11.5px;color:#333;font-family:'Liberation Mono';transform:scaleX(1.0692);transform-origin:0 0;">1345</div>
<div class="t" style="left:9.24px;top:96px;font-size:11.5px;color:#333;font-family:'Liberation Mono';transform:scaleX(1.0577);transform-origin:0 0;">0452</div>
<div class="t" style="left:50.78px;top:96px;font-size:11.5px;color:#333;font-family:'Liberation Mono';transform:scaleX(1.1111);transform-origin:0 0;">-30</div>
<div class="t" style="left:94.82px;top:96px;font-size:11.5px;color:#333;font-family:'Liberation Mono';transform:scaleX(1.0789);transform-origin:0 0;">0.0</div>
<div class="t" style="left:145.16px;top:96px;font-size:11.5px;color:#333;font-family:'Liberation Mono';transform:scaleX(1.0370);transform-origin:0 0;">0.475790</div>
<div class="t" style="left:231.20px;top:96px;font-size:11.5px;color:#333;font-family:'Liberation Mono';transform:scaleX(1.1000);transform-origin:0 0;">0</div>
<div class="t" style="left:259.94px;top:96px;font-size:11.5px;color:#333;font-family:'Liberation Mono';transform:scaleX(1.0600);transform-origin:0 0;">OH1LSQ</div>
<div class="t" style="left:359.63px;top:96px;font-size:11.5px;color:#333;font-family:'Liberation Mono';transform:scaleX(1.0654);transform-origin:0 0;">KP03</div>
<div class="t" style="left:424.04px;top:96px;font-size:11.5px;color:#333;font-family:'Liberation Mono';transform:scaleX(1.1583);transform-origin:0 0;">27</div>
<div class="t" style="left:460.13px;top:96px;font-size:11.5px;color:#333;font-family:'Liberation Mono';transform:scaleX(1.0692);transform-origin:0 0;">1345</div>
</div>
<div class="a" style="left:529px;top:66px;width:16px;height:112px;background:#f0f0f0"></div>
<svg class="a" style="left:533px;top:72px" width="8" height="6"><path d="M1 5L4 2L7 5" stroke="#606060" fill="none" stroke-width="1.3"/></svg>
<div class="a" style="left:530px;top:146px;width:14px;height:16px;background:#cdcdcd"></div>
<svg class="a" style="left:533px;top:167px" width="8" height="6"><path d="M1 1L4 4L7 1" stroke="#606060" fill="none" stroke-width="1.3"/></svg>
<div class="a" style="left:7px;top:182px;width:66px;height:19px;background:#e1e1e1;border:1px solid #adadad"></div>
<div class="t" style="left:28.70px;top:188px;font-size:9.5px;color:#111;transform:scaleX(1.0190);transform-origin:0 0;">Стоп</div>
<div class="a" style="left:77px;top:184px;width:67px;height:16px;background:#00f000;border:1px solid #0a7a0a;border-radius:3px"></div>
<div class="t" style="left:89.97px;top:188px;font-size:9.5px;color:#333;transform:scaleX(1.0263);transform-origin:0 0;">Монитор</div>
<div class="a" style="left:149px;top:183px;width:60px;height:19px;background:#e1e1e1;border:1px solid #adadad"></div>
<div class="t" style="left:163.50px;top:188px;font-size:9.5px;color:#111;transform:scaleX(0.9808);transform-origin:0 0;">Очист</div>
<div class="a" style="left:7px;top:211px;width:55px;height:18px;background:#fff;border:1px solid #adadad"></div>
<div class="t" style="left:7.94px;top:216px;font-size:10.5px;color:#111;transform:scaleX(0.9640);transform-origin:0 0;">630m</div>
<svg class="a" style="left:49px;top:218px" width="9" height="6"><path d="M1 1L4.5 4.5L8 1" stroke="#555" fill="none"/></svg>
<div class="a" style="left:65px;top:213.5px;width:13px;height:13px;border-radius:50%;background:#19e619"></div>
<div class="a" style="left:82px;top:206px;width:108px;height:29px;background:#000"></div>
<div class="t" style="left:94.97px;top:211px;font-size:20.0px;color:#f0f06a;transform:scaleX(0.9318);transform-origin:0 0;">0,474 200</div>
<div class="a" style="left:7px;top:239px;width:43px;height:137px;background:#f0f0f0;border:1px solid #dadada"></div>
<div class="a" style="left:21px;top:252px;width:1px;height:98px;background:#3a3a3a"></div>
<div class="a" style="left:21px;top:252px;width:4px;height:1px;background:#3a3a3a"></div>
<div class="a" style="left:22px;top:264px;width:3px;height:1px;background:#3a3a3a"></div>
<div class="a" style="left:22px;top:275px;width:3px;height:1px;background:#3a3a3a"></div>
<div class="t" style="left:24.80px;top:260px;font-size:9.0px;color:#222;transform:scaleX(1.0300);transform-origin:0 0;">80</div>
<div class="a" style="left:22px;top:286px;width:3px;height:1px;background:#3a3a3a"></div>
<div class="a" style="left:22px;top:297px;width:3px;height:1px;background:#3a3a3a"></div>
<div class="t" style="left:24.80px;top:282px;font-size:9.0px;color:#222;transform:scaleX(1.0300);transform-origin:0 0;">60</div>
<div class="a" style="left:22px;top:308px;width:3px;height:1px;background:#3a3a3a"></div>
<div class="a" style="left:22px;top:319px;width:3px;height:1px;background:#3a3a3a"></div>
<div class="t" style="left:24.80px;top:304px;font-size:9.0px;color:#222;transform:scaleX(1.0300);transform-origin:0 0;">40</div>
<div class="a" style="left:22px;top:330px;width:3px;height:1px;background:#3a3a3a"></div>
<div class="a" style="left:22px;top:341px;width:3px;height:1px;background:#3a3a3a"></div>
<div class="t" style="left:24.80px;top:326px;font-size:9.0px;color:#222;transform:scaleX(1.0300);transform-origin:0 0;">20</div>
<div class="a" style="left:22px;top:352px;width:3px;height:1px;background:#3a3a3a"></div>
<div class="a" style="left:22px;top:363px;width:3px;height:1px;background:#3a3a3a"></div>
<div class="t" style="left:24.80px;top:348px;font-size:9.0px;color:#222;transform:scaleX(1.0400);transform-origin:0 0;">0</div>
<div class="a" style="left:16px;top:298px;width:5px;height:52px;background:#5c9e5c"></div>
<svg class="a" style="left:15px;top:295px" width="8" height="5"><path d="M0 0L8 2.5L0 5z" fill="#111"/></svg>
<div class="t" style="left:11.50px;top:361px;font-size:10.0px;color:#222;transform:scaleX(1.0577);transform-origin:0 0;">48 dB</div>
<div class="a" style="left:56px;top:240px;width:22px;height:19px;background:#e0e0e0;border:1px solid #d2d2d2"></div>
<div class="a" style="left:56px;top:264px;width:22px;height:19px;background:#e0e0e0;border:1px solid #d2d2d2"></div>
<div class="a" style="left:56px;top:288px;width:22px;height:19px;background:#e0e0e0;border:1px solid #d2d2d2"></div>
<div class="a" style="left:56px;top:312px;width:22px;height:19px;background:#e0e0e0;border:1px solid #d2d2d2"></div>
<div class="a" style="left:56px;top:336px;width:22px;height:19px;background:#e0e0e0;border:1px solid #d2d2d2"></div>
<div class="a" style="left:56px;top:360px;width:22px;height:19px;background:#e0e0e0;border:1px solid #d2d2d2"></div>
<div class="t" style="left:61.08px;top:247px;font-size:10.0px;color:#333;transform:scaleX(1.2167);transform-origin:0 0;">H</div>
<div class="t" style="left:56.64px;top:271px;font-size:10.0px;color:#333;transform:scaleX(0.9647);transform-origin:0 0;">FT8</div>
<div class="t" style="left:56.64px;top:295px;font-size:10.0px;color:#333;transform:scaleX(0.9647);transform-origin:0 0;">FT4</div>
<div class="t" style="left:55.58px;top:319px;font-size:10.0px;color:#333;transform:scaleX(0.9250);transform-origin:0 0;">MSK</div>
<div class="t" style="left:57.50px;top:343px;font-size:10.0px;color:#333;transform:scaleX(0.8947);transform-origin:0 0;">Q65</div>
<div class="t" style="left:56.00px;top:367px;font-size:10.0px;color:#333;transform:scaleX(0.9091);transform-origin:0 0;">JT65</div>
<div class="a" style="left:82px;top:325px;width:108px;height:53px;background:#000"></div>
<div class="t" style="left:85.08px;top:330px;font-size:20.5px;color:#f0f06a;transform:scaleX(0.9188);transform-origin:0 0;">2025 ноя 22</div>
<div class="t" style="left:99.84px;top:354px;font-size:20.0px;color:#f0f06a;transform:scaleX(0.9645);transform-origin:0 0;">05:04:22</div>
<div class="a" style="left:0px;top:381px;width:551px;height:17px;background:#f0f0f0"></div>
<div class="a" style="left:1px;top:387px;width:60px;height:11px;background:#00f000"></div>
<div class="t" style="left:16.04px;top:388px;font-size:9.5px;color:#334433;transform:scaleX(0.9643);transform-origin:0 0;">Прием</div>
<div class="a" style="left:64px;top:387px;width:48px;height:11px;background:#ee77ee"></div>
<div class="t" style="left:76.00px;top:388px;font-size:9.5px;color:#552255;transform:scaleX(0.8929);transform-origin:0 0;">WSPR</div>
<div class="a" style="left:116px;top:386px;width:80px;height:12px;border:1px solid #dadada"></div>
<div class="a" style="left:0px;top:398px;width:551px;height:1px;background:#a8a8a8"></div>
<div class="a" style="left:1021px;top:180px;width:3px;height:238px;background:linear-gradient(#101010,#101010 15%,#1a2050 40%,#2a3480)"></div>
<div class="a" style="left:552px;top:180px;width:469px;height:238px;background:#c9d3de"></div>
<div class="a" style="left:552px;top:180px;width:469px;height:1px;background:#fafafa"></div>
<div class="a" style="left:552px;top:202px;width:469px;height:216px;background:#eef2f6"></div>
<svg class="a" style="left:1008px;top:187px" width="10" height="10"><path d="M1 1L9 9M9 1L1 9" stroke="#1a2030" stroke-width="1.8"/></svg>
<div class="a" style="left:560px;top:202px;width:237px;height:214px;background:#000"></div>
<div class="a" style="left:562px;top:204px;width:233px;height:210px;border:1.5px solid #e8e848"></div>
<div class="a" style="left:564px;top:206px;width:229px;height:85px;background:#000"></div>
<div class="a" style="left:564px;top:221px;width:204px;height:1px;background:repeating-linear-gradient(90deg,#5a4a3a 0 1px,transparent 1px 4px);opacity:0.7"></div>
<div class="a" style="left:564px;top:237px;width:204px;height:1px;background:repeating-linear-gradient(90deg,#5a4a3a 0 1px,transparent 1px 4px);opacity:0.7"></div>
<svg class="a" style="left:0;top:0" width="1024" height="545"><defs><linearGradient id="sg564" x1="0" y1="0" x2="0" y2="1"><stop offset="0" stop-color="#b4bce0"/><stop offset="0.12" stop-color="#8a98d8"/><stop offset="0.4" stop-color="#4c5cb0"/><stop offset="1" stop-color="#12183e"/></linearGradient></defs><path d="M564 291 L564.0 254.3 L565.5 254.3 L567.0 254.6 L568.5 254.6 L570.0 255.2 L571.5 250.7 L573.0 249.4 L574.5 250.7 L576.0 253.4 L577.5 254.1 L579.0 253.2 L580.5 252.8 L582.0 253.0 L583.5 250.3 L585.0 252.9 L586.5 253.9 L588.0 254.5 L589.5 254.0 L591.0 255.3 L592.5 255.4 L594.0 254.4 L595.5 253.5 L597.0 253.7 L598.5 253.8 L600.0 254.9 L601.5 250.9 L603.0 252.4 L604.5 253.1 L606.0 249.8 L607.5 251.4 L609.0 250.6 L610.5 252.9 L612.0 250.8 L613.5 251.3 L615.0 252.0 L616.5 253.0 L618.0 254.2 L619.5 254.6 L621.0 250.4 L622.5 251.7 L624.0 253.6 L625.5 254.8 L627.0 254.4 L628.5 254.8 L630.0 248.9 L631.5 250.9 L633.0 252.1 L634.5 252.3 L636.0 249.9 L637.5 252.2 L639.0 253.1 L640.5 253.7 L642.0 254.8 L643.5 253.9 L645.0 254.9 L646.5 254.0 L648.0 255.2 L649.5 255.8 L651.0 255.4 L652.5 254.2 L654.0 249.0 L655.5 251.9 L657.0 253.8 L658.5 253.6 L660.0 254.5 L661.5 250.9 L663.0 253.2 L664.5 253.3 L666.0 253.2 L667.5 250.8 L669.0 251.5 L670.5 252.5 L672.0 252.6 L673.5 254.3 L675.0 254.7 L676.5 254.8 L678.0 253.6 L679.5 249.1 L681.0 252.5 L682.5 249.8 L684.0 252.4 L685.5 254.4 L687.0 250.0 L688.5 252.9 L690.0 254.1 L691.5 255.1 L693.0 255.2 L694.5 255.7 L696.0 255.8 L697.5 255.4 L699.0 254.7 L700.5 254.8 L702.0 249.8 L703.5 252.7 L705.0 253.3 L706.5 254.0 L708.0 254.9 L709.5 249.5 L711.0 249.9 L712.5 251.4 L714.0 252.8 L715.5 254.4 L717.0 253.4 L718.5 254.3 L720.0 253.7 L721.5 254.4 L723.0 255.3 L724.5 255.3 L726.0 254.8 L727.5 255.5 L729.0 254.8 L730.5 254.3 L732.0 254.4 L733.5 255.2 L735.0 255.8 L736.5 254.5 L738.0 254.0 L739.5 254.0 L741.0 254.2 L742.5 255.1 L744.0 254.7 L745.5 251.4 L747.0 251.8 L748.5 253.1 L750.0 254.4 L751.5 251.1 L753.0 251.6 L754.5 252.3 L756.0 252.3 L757.5 253.2 L759.0 254.1 L760.0 253.0 L764.0 250.0 L768.0 252.0 L772.0 247.0 L775.0 249.0 L778.0 244.0 L781.0 246.0 L784.0 238.0 L786.0 240.0 L788.0 234.0 L790.0 228.0 L791.0 222.0 L793.0 225.0 L793 291 Z" fill="url(#sg564)" transform="translate(0,0)"/><polyline points="564.0,254.3 565.5,254.3 567.0,254.6 568.5,254.6 570.0,255.2 571.5,250.7 573.0,249.4 574.5,250.7 576.0,253.4 577.5,254.1 579.0,253.2 580.5,252.8 582.0,253.0 583.5,250.3 585.0,252.9 586.5,253.9 588.0,254.5 589.5,254.0 591.0,255.3 592.5,255.4 594.0,254.4 595.5,253.5 597.0,253.7 598.5,253.8 600.0,254.9 601.5,250.9 603.0,252.4 604.5,253.1 606.0,249.8 607.5,251.4 609.0,250.6 610.5,252.9 612.0,250.8 613.5,251.3 615.0,252.0 616.5,253.0 618.0,254.2 619.5,254.6 621.0,250.4 622.5,251.7 624.0,253.6 625.5,254.8 627.0,254.4 628.5,254.8 630.0,248.9 631.5,250.9 633.0,252.1 634.5,252.3 636.0,249.9 637.5,252.2 639.0,253.1 640.5,253.7 642.0,254.8 643.5,253.9 645.0,254.9 646.5,254.0 648.0,255.2 649.5,255.8 651.0,255.4 652.5,254.2 654.0,249.0 655.5,251.9 657.0,253.8 658.5,253.6 660.0,254.5 661.5,250.9 663.0,253.2 664.5,253.3 666.0,253.2 667.5,250.8 669.0,251.5 670.5,252.5 672.0,252.6 673.5,254.3 675.0,254.7 676.5,254.8 678.0,253.6 679.5,249.1 681.0,252.5 682.5,249.8 684.0,252.4 685.5,254.4 687.0,250.0 688.5,252.9 690.0,254.1 691.5,255.1 693.0,255.2 694.5,255.7 696.0,255.8 697.5,255.4 699.0,254.7 700.5,254.8 702.0,249.8 703.5,252.7 705.0,253.3 706.5,254.0 708.0,254.9 709.5,249.5 711.0,249.9 712.5,251.4 714.0,252.8 715.5,254.4 717.0,253.4 718.5,254.3 720.0,253.7 721.5,254.4 723.0,255.3 724.5,255.3 726.0,254.8 727.5,255.5 729.0,254.8 730.5,254.3 732.0,254.4 733.5,255.2 735.0,255.8 736.5,254.5 738.0,254.0 739.5,254.0 741.0,254.2 742.5,255.1 744.0,254.7 745.5,251.4 747.0,251.8 748.5,253.1 750.0,254.4 751.5,251.1 753.0,251.6 754.5,252.3 756.0,252.3 757.5,253.2 759.0,254.1 760.0,253.0 764.0,250.0 768.0,252.0 772.0,247.0 775.0,249.0 778.0,244.0 781.0,246.0 784.0,238.0 786.0,240.0 788.0,234.0 790.0,228.0 791.0,222.0 793.0,225.0" stroke="#dde2f4" stroke-width="0.9" fill="none" opacity="0.75"/></svg>
<svg class="a" style="left:600px;top:209px" width="96" height="39" viewBox="0 0 96 39"><defs><linearGradient id="mg600" x1="0" y1="0" x2="1" y2="1"><stop offset="0" stop-color="#fde9b0"/><stop offset="0.6" stop-color="#fadb8e"/><stop offset="1" stop-color="#f2c46a"/></linearGradient></defs><rect x="0.5" y="0.5" width="95" height="38" fill="url(#mg600)" stroke="#6b5a3a" stroke-width="1.5"/><path d="M8.6 19.5A115.2 115.2 0 0 1 87.4 19.5" stroke="#3a3020" stroke-width="2.2" fill="none"/><path d="M8.6 19.5L6.9 14.8" stroke="#3a3020" stroke-width="1.6"/><path d="M14.0 17.7L13.2 14.8" stroke="#3a3020" stroke-width="1.6"/><path d="M19.6 16.1L18.3 11.3" stroke="#3a3020" stroke-width="1.6"/><path d="M25.2 14.8L24.6 11.9" stroke="#3a3020" stroke-width="1.6"/><path d="M30.8 13.8L30.1 8.9" stroke="#3a3020" stroke-width="1.6"/><path d="M36.5 13.1L36.2 10.1" stroke="#3a3020" stroke-width="1.6"/><path d="M42.3 12.7L42.0 7.7" stroke="#3a3020" stroke-width="1.6"/><path d="M48.0 12.6L48.0 9.6" stroke="#3a3020" stroke-width="1.6"/><path d="M53.7 12.7L54.0 7.7" stroke="#3a3020" stroke-width="1.6"/><path d="M59.5 13.1L59.8 10.1" stroke="#3a3020" stroke-width="1.6"/><path d="M65.2 13.8L65.9 8.9" stroke="#3a3020" stroke-width="1.6"/><path d="M70.8 14.8L71.4 11.9" stroke="#3a3020" stroke-width="1.6"/><path d="M76.4 16.1L77.7 11.3" stroke="#3a3020" stroke-width="1.6"/><path d="M82.0 17.7L82.8 14.8" stroke="#3a3020" stroke-width="1.6"/><path d="M87.4 19.5L89.1 14.8" stroke="#3a3020" stroke-width="1.6"/><rect x="50" y="26" width="21" height="9" fill="#c8e86a" stroke="#8fb040" stroke-width="1"/><text x="60.5" y="33" font-size="8" font-family="Liberation Sans" font-weight="bold" text-anchor="middle" fill="#1a2a00">9.7</text><rect x="24" y="26" width="21" height="9" fill="#c8e86a" stroke="#8fb040" stroke-width="1"/><text x="34.5" y="33" font-size="8" font-family="Liberation Sans" font-weight="bold" text-anchor="middle" fill="#1a2a00">0.3</text><path d="M42 3V39" stroke="#d02010" stroke-width="1.6"/></svg>
<svg class="a" style="left:661px;top:252px" width="50" height="39"><defs><linearGradient id="gb" x1="0" y1="0" x2="0" y2="1"><stop offset="0" stop-color="#20f040" stop-opacity="0.95"/><stop offset="0.15" stop-color="#20c040" stop-opacity="0.7"/><stop offset="0.2" stop-color="#408060" stop-opacity="0.55"/><stop offset="0.85" stop-color="#306050" stop-opacity="0.55"/><stop offset="0.9" stop-color="#30c040" stop-opacity="0.8"/><stop offset="1" stop-color="#20a030" stop-opacity="0.9"/></linearGradient></defs><rect x="0.5" y="0.5" width="49" height="38" fill="url(#gb)" stroke="#30e040" stroke-width="1"/></svg>
<div class="t" style="left:771px;top:207px;font-size:5px;color:#909090;opacity:0.45">-40 dBm</div>
<div class="t" style="left:771px;top:214px;font-size:5px;color:#909090;opacity:0.45">-40 dBm</div>
<div class="t" style="left:771px;top:221px;font-size:5px;color:#909090;opacity:0.45">-40 dBm</div>
<div class="t" style="left:771px;top:229px;font-size:5px;color:#909090;opacity:0.45">-40 dBm</div>
<div class="t" style="left:771px;top:236px;font-size:5px;color:#909090;opacity:0.45">-40 dBm</div>
<div class="t" style="left:771px;top:243px;font-size:5px;color:#909090;opacity:0.45">-40 dBm</div>
<div class="t" style="left:771px;top:258px;font-size:5px;color:#909090;opacity:0.45">-40 dBm</div>
<div class="t" style="left:771px;top:266px;font-size:5px;color:#909090;opacity:0.45">-40 dBm</div>
<div class="t" style="left:771px;top:273px;font-size:5px;color:#909090;opacity:0.45">-40 dBm</div>
<div class="t" style="left:771px;top:281px;font-size:5px;color:#909090;opacity:0.45">-40 dBm</div>
<div class="a" style="left:564px;top:291px;width:229px;height:9px;background:linear-gradient(#7a7a7a,#4a4a4a 45%,#262626)"></div>
<div class="a" style="left:567px;top:291px;width:1px;height:4px;background:#bbbbbb;opacity:0.5"></div>
<div class="a" style="left:573px;top:291px;width:1px;height:2px;background:#bbbbbb;opacity:0.5"></div>
<div class="a" style="left:579px;top:291px;width:1px;height:4px;background:#bbbbbb;opacity:0.5"></div>
<div class="a" style="left:585px;top:291px;width:1px;height:2px;background:#bbbbbb;opacity:0.5"></div>
<div class="a" style="left:591px;top:291px;width:1px;height:4px;background:#bbbbbb;opacity:0.5"></div>
<div class="a" style="left:597px;top:291px;width:1px;height:2px;background:#bbbbbb;opacity:0.5"></div>
<div class="a" style="left:603px;top:291px;width:1px;height:4px;background:#bbbbbb;opacity:0.5"></div>
<div class="a" style="left:609px;top:291px;width:1px;height:2px;background:#bbbbbb;opacity:0.5"></div>
<div class="a" style="left:615px;top:291px;width:1px;height:4px;background:#bbbbbb;opacity:0.5"></div>
<div class="a" style="left:621px;top:291px;width:1px;height:2px;background:#bbbbbb;opacity:0.5"></div>
<div class="a" style="left:627px;top:291px;width:1px;height:4px;background:#bbbbbb;opacity:0.5"></div>
<div class="a" style="left:633px;top:291px;width:1px;height:2px;background:#bbbbbb;opacity:0.5"></div>
<div class="a" style="left:639px;top:291px;width:1px;height:4px;background:#bbbbbb;opacity:0.5"></div>
<div class="a" style="left:645px;top:291px;width:1px;height:2px;background:#bbbbbb;opacity:0.5"></div>
<div class="a" style="left:651px;top:291px;width:1px;height:4px;background:#bbbbbb;opacity:0.5"></div>
<div class="a" style="left:657px;top:291px;width:1px;height:2px;background:#bbbbbb;opacity:0.5"></div>
<div class="a" style="left:663px;top:291px;width:1px;height:4px;background:#bbbbbb;opacity:0.5"></div>
<div class="a" style="left:669px;top:291px;width:1px;height:2px;background:#bbbbbb;opacity:0.5"></div>
<div class="a" style="left:675px;top:291px;width:1px;height:4px;background:#bbbbbb;opacity:0.5"></div>
<div class="a" style="left:681px;top:291px;width:1px;height:2px;background:#bbbbbb;opacity:0.5"></div>
<div class="a" style="left:687px;top:291px;width:1px;height:4px;background:#bbbbbb;opacity:0.5"></div>
<div class="a" style="left:693px;top:291px;width:1px;height:2px;background:#bbbbbb;opacity:0.5"></div>
<div class="a" style="left:699px;top:291px;width:1px;height:4px;background:#bbbbbb;opacity:0.5"></div>
<div class="a" style="left:705px;top:291px;width:1px;height:2px;background:#bbbbbb;opacity:0.5"></div>
<div class="a" style="left:711px;top:291px;width:1px;height:4px;background:#bbbbbb;opacity:0.5"></div>
<div class="a" style="left:717px;top:291px;width:1px;height:2px;background:#bbbbbb;opacity:0.5"></div>
<div class="a" style="left:723px;top:291px;width:1px;height:4px;background:#bbbbbb;opacity:0.5"></div>
<div class="a" style="left:729px;top:291px;width:1px;height:2px;background:#bbbbbb;opacity:0.5"></div>
<div class="a" style="left:735px;top:291px;width:1px;height:4px;background:#bbbbbb;opacity:0.5"></div>
<div class="a" style="left:741px;top:291px;width:1px;height:2px;background:#bbbbbb;opacity:0.5"></div>
<div class="a" style="left:747px;top:291px;width:1px;height:4px;background:#bbbbbb;opacity:0.5"></div>
<div class="a" style="left:753px;top:291px;width:1px;height:2px;background:#bbbbbb;opacity:0.5"></div>
<div class="a" style="left:759px;top:291px;width:1px;height:4px;background:#bbbbbb;opacity:0.5"></div>
<div class="a" style="left:765px;top:291px;width:1px;height:2px;background:#bbbbbb;opacity:0.5"></div>
<div class="a" style="left:771px;top:291px;width:1px;height:4px;background:#bbbbbb;opacity:0.5"></div>
<div class="a" style="left:777px;top:291px;width:1px;height:2px;background:#bbbbbb;opacity:0.5"></div>
<div class="a" style="left:783px;top:291px;width:1px;height:4px;background:#bbbbbb;opacity:0.5"></div>
<div class="a" style="left:789px;top:291px;width:1px;height:2px;background:#bbbbbb;opacity:0.5"></div>
<div class="a" style="left:564px;top:300px;width:229px;height:7px;background:#000"></div>
<div class="t" style="left:637.00px;top:297px;font-size:9.5px;color:#f0f0f0;transform:scaleX(1.0010);transform-origin:0 0;">137</div>
<div class="t" style="left:717.46px;top:297px;font-size:9.5px;color:#f0f0f0;transform:scaleX(1.0357);transform-origin:0 0;">138</div>
<svg class="a" style="left:564px;top:307px" width="229" height="107"><defs><filter id="pw564" x="0" y="0" width="100%" height="100%"><feTurbulence type="fractalNoise" baseFrequency="0.05 0.6" numOctaves="3" seed="21" result="a"/><feTurbulence type="fractalNoise" baseFrequency="0.02 0.05" numOctaves="1" seed="28" result="b"/><feComposite in="a" in2="b" operator="arithmetic" k1="0" k2="1.1" k3="0.45" k4="-0.28"/><feColorMatrix values="0 0 0 0 0.32  0 0 0 0 0.4  0 0 0 0 0.9  2.6 0 0 0 -0.95"/></filter></defs><rect width="229" height="107" fill="#070a2e"/><rect width="229" height="107" filter="url(#pw564)"/></svg>
<div class="a" style="left:661px;top:307px;width:1px;height:76px;background:repeating-linear-gradient(#3a9a3a 0 2px,transparent 2px 4px)"></div>
<div class="a" style="left:710px;top:307px;width:1px;height:76px;background:repeating-linear-gradient(#3a9a3a 0 2px,transparent 2px 4px)"></div>
<div class="a" style="left:776px;top:317px;width:18px;height:3px;background:linear-gradient(90deg,rgba(180,200,255,0.3),#d8e4ff 40%,#a8b8ff)"></div>
<div class="a" style="left:776px;top:322px;width:18px;height:3px;background:linear-gradient(90deg,rgba(180,200,255,0.3),#d8e4ff 40%,#a8b8ff)"></div>
<div class="a" style="left:776px;top:327px;width:18px;height:3px;background:linear-gradient(90deg,rgba(180,200,255,0.3),#d8e4ff 40%,#a8b8ff)"></div>
<div class="a" style="left:776px;top:332px;width:18px;height:3px;background:linear-gradient(90deg,rgba(180,200,255,0.3),#d8e4ff 40%,#a8b8ff)"></div>
<svg class="a" style="left:641px;top:383px" width="90" height="28"><defs><radialGradient id="yl" cx="0.5" cy="0.5" r="0.5"><stop offset="0" stop-color="#c8c020" stop-opacity="0.95"/><stop offset="1" stop-color="#c8c020" stop-opacity="0"/></radialGradient></defs><rect x="0.5" y="0.5" width="89" height="27" rx="5" fill="rgba(20,20,20,0.85)" stroke="#555" stroke-width="1"/><ellipse cx="36" cy="25" rx="38" ry="9" fill="url(#yl)"/></svg>
<div class="t" style="left:648px;top:391px;font-size:11.5px;color:#f4f4f4;font-family:'Liberation Mono',monospace">1 : 136 kHz</div>
<div class="a" style="left:797px;top:202px;width:2px;height:214px;background:#fbfbfb"></div>
<div class="a" style="left:799px;top:205px;width:219px;height:208px;background:#000"></div>
<div class="t" style="left:804px;top:207px;font-size:5px;color:#909090;opacity:0.45">-40 dBm</div>
<div class="t" style="left:999px;top:207px;font-size:5px;color:#909090;opacity:0.45">-40 dBm</div>
<div class="t" style="left:804px;top:214px;font-size:5px;color:#909090;opacity:0.45">-40 dBm</div>
<div class="t" style="left:999px;top:214px;font-size:5px;color:#909090;opacity:0.45">-40 dBm</div>
<div class="t" style="left:804px;top:221px;font-size:5px;color:#909090;opacity:0.45">-40 dBm</div>
<div class="t" style="left:999px;top:221px;font-size:5px;color:#909090;opacity:0.45">-40 dBm</div>
<div class="t" style="left:804px;top:229px;font-size:5px;color:#909090;opacity:0.45">-40 dBm</div>
<div class="t" style="left:999px;top:229px;font-size:5px;color:#909090;opacity:0.45">-40 dBm</div>
<div class="t" style="left:804px;top:236px;font-size:5px;color:#909090;opacity:0.45">-40 dBm</div>
<div class="t" style="left:999px;top:236px;font-size:5px;color:#909090;opacity:0.45">-40 dBm</div>
<div class="t" style="left:804px;top:243px;font-size:5px;color:#909090;opacity:0.45">-40 dBm</div>
<div class="t" style="left:999px;top:243px;font-size:5px;color:#909090;opacity:0.45">-40 dBm</div>
<div class="a" style="left:830px;top:209px;width:168px;height:1px;background:repeating-linear-gradient(90deg,#4a4030 0 1px,transparent 1px 4px);opacity:0.8"></div>
<div class="a" style="left:830px;top:223px;width:168px;height:1px;background:repeating-linear-gradient(90deg,#4a4030 0 1px,transparent 1px 4px);opacity:0.8"></div>
<div class="a" style="left:830px;top:237px;width:168px;height:1px;background:repeating-linear-gradient(90deg,#4a4030 0 1px,transparent 1px 4px);opacity:0.8"></div>
<div class="t" style="left:806px;top:258px;font-size:5px;color:#9aa4d0;opacity:0.3">-40 dBm</div>
<div class="t" style="left:999px;top:258px;font-size:5px;color:#9aa4d0;opacity:0.3">-40 dBm</div>
<div class="t" style="left:806px;top:266px;font-size:5px;color:#9aa4d0;opacity:0.3">-40 dBm</div>
<div class="t" style="left:999px;top:266px;font-size:5px;color:#9aa4d0;opacity:0.3">-40 dBm</div>
<div class="t" style="left:806px;top:273px;font-size:5px;color:#9aa4d0;opacity:0.3">-40 dBm</div>
<div class="t" style="left:999px;top:273px;font-size:5px;color:#9aa4d0;opacity:0.3">-40 dBm</div>
<div class="t" style="left:806px;top:281px;font-size:5px;color:#9aa4d0;opacity:0.3">-40 dBm</div>
<div class="t" style="left:999px;top:281px;font-size:5px;color:#9aa4d0;opacity:0.3">-40 dBm</div>
<svg class="a" style="left:0;top:0" width="1024" height="545"><defs><linearGradient id="sg803" x1="0" y1="0" x2="0" y2="1"><stop offset="0" stop-color="#b4bce0"/><stop offset="0.12" stop-color="#8a98d8"/><stop offset="0.4" stop-color="#4c5cb0"/><stop offset="1" stop-color="#12183e"/></linearGradient></defs><path d="M803 291 L803.0 254.5 L804.5 254.0 L806.0 254.4 L807.5 251.1 L809.0 251.3 L810.5 252.2 L812.0 254.4 L813.5 254.3 L815.0 255.8 L816.5 255.4 L818.0 254.5 L819.5 254.5 L821.0 254.1 L822.5 255.4 L824.0 255.6 L825.5 255.3 L827.0 254.4 L828.5 251.9 L830.0 253.4 L831.5 254.5 L833.0 254.5 L834.5 255.4 L836.0 255.6 L837.5 256.3 L839.0 255.5 L840.5 254.7 L842.0 255.6 L843.5 255.5 L845.0 250.7 L846.5 253.0 L848.0 253.7 L849.5 254.7 L851.0 255.0 L852.5 256.2 L854.0 256.2 L855.5 250.6 L857.0 253.9 L858.5 254.1 L860.0 255.1 L861.5 251.3 L863.0 252.3 L864.5 250.5 L866.0 252.2 L867.5 254.5 L869.0 251.3 L870.5 254.0 L872.0 255.5 L873.5 255.3 L875.0 256.2 L876.5 255.1 L878.0 254.7 L879.5 255.0 L881.0 254.7 L882.5 251.4 L884.0 253.4 L885.5 254.7 L887.0 255.3 L888.5 254.4 L890.0 255.5 L891.5 256.1 L893.0 255.6 L894.5 250.8 L896.0 252.3 L897.5 253.0 L899.0 253.1 L900.5 252.1 L902.0 251.5 L903.5 250.2 L905.0 251.8 L906.5 253.1 L908.0 253.4 L909.5 255.4 L911.0 255.4 L912.5 252.2 L914.0 253.2 L915.5 253.5 L917.0 250.0 L918.5 251.7 L920.0 252.4 L921.5 254.8 L923.0 255.5 L924.5 255.2 L926.0 255.9 L927.5 256.3 L929.0 255.3 L930.5 256.5 L932.0 256.7 L933.5 256.7 L935.0 256.2 L936.5 254.8 L938.0 251.7 L939.5 253.8 L941.0 254.5 L942.5 256.0 L944.0 255.5 L945.5 254.9 L947.0 254.5 L948.5 255.8 L950.0 255.6 L951.5 256.2 L953.0 250.7 L954.5 253.5 L956.0 254.3 L957.5 255.5 L959.0 256.1 L960.5 255.6 L962.0 256.5 L963.5 255.3 L965.0 254.6 L966.5 255.7 L968.0 256.3 L969.5 256.3 L971.0 256.0 L972.5 254.7 L974.0 255.4 L975.5 256.4 L977.0 256.8 L978.5 255.6 L980.0 255.1 L981.5 255.4 L983.0 255.3 L984.5 256.3 L986.0 255.8 L987.5 256.5 L989.0 257.0 L990.5 256.4 L992.0 254.9 L993.5 254.5 L995.0 250.4 L996.5 252.6 L998.0 254.0 L999.5 254.7 L1001.0 255.7 L1002.5 251.0 L1004.0 252.5 L1005.5 253.9 L1007.0 255.2 L1008.5 255.2 L1010.0 255.3 L1011.5 255.8 L1013.0 255.7 L1014 291 Z" fill="url(#sg803)" transform="translate(0,0)"/><polyline points="803.0,254.5 804.5,254.0 806.0,254.4 807.5,251.1 809.0,251.3 810.5,252.2 812.0,254.4 813.5,254.3 815.0,255.8 816.5,255.4 818.0,254.5 819.5,254.5 821.0,254.1 822.5,255.4 824.0,255.6 825.5,255.3 827.0,254.4 828.5,251.9 830.0,253.4 831.5,254.5 833.0,254.5 834.5,255.4 836.0,255.6 837.5,256.3 839.0,255.5 840.5,254.7 842.0,255.6 843.5,255.5 845.0,250.7 846.5,253.0 848.0,253.7 849.5,254.7 851.0,255.0 852.5,256.2 854.0,256.2 855.5,250.6 857.0,253.9 858.5,254.1 860.0,255.1 861.5,251.3 863.0,252.3 864.5,250.5 866.0,252.2 867.5,254.5 869.0,251.3 870.5,254.0 872.0,255.5 873.5,255.3 875.0,256.2 876.5,255.1 878.0,254.7 879.5,255.0 881.0,254.7 882.5,251.4 884.0,253.4 885.5,254.7 887.0,255.3 888.5,254.4 890.0,255.5 891.5,256.1 893.0,255.6 894.5,250.8 896.0,252.3 897.5,253.0 899.0,253.1 900.5,252.1 902.0,251.5 903.5,250.2 905.0,251.8 906.5,253.1 908.0,253.4 909.5,255.4 911.0,255.4 912.5,252.2 914.0,253.2 915.5,253.5 917.0,250.0 918.5,251.7 920.0,252.4 921.5,254.8 923.0,255.5 924.5,255.2 926.0,255.9 927.5,256.3 929.0,255.3 930.5,256.5 932.0,256.7 933.5,256.7 935.0,256.2 936.5,254.8 938.0,251.7 939.5,253.8 941.0,254.5 942.5,256.0 944.0,255.5 945.5,254.9 947.0,254.5 948.5,255.8 950.0,255.6 951.5,256.2 953.0,250.7 954.5,253.5 956.0,254.3 957.5,255.5 959.0,256.1 960.5,255.6 962.0,256.5 963.5,255.3 965.0,254.6 966.5,255.7 968.0,256.3 969.5,256.3 971.0,256.0 972.5,254.7 974.0,255.4 975.5,256.4 977.0,256.8 978.5,255.6 980.0,255.1 981.5,255.4 983.0,255.3 984.5,256.3 986.0,255.8 987.5,256.5 989.0,257.0 990.5,256.4 992.0,254.9 993.5,254.5 995.0,250.4 996.5,252.6 998.0,254.0 999.5,254.7 1001.0,255.7 1002.5,251.0 1004.0,252.5 1005.5,253.9 1007.0,255.2 1008.5,255.2 1010.0,255.3 1011.5,255.8 1013.0,255.7" stroke="#dde2f4" stroke-width="0.9" fill="none" opacity="0.75"/></svg>
<svg class="a" style="left:824px;top:212px" width="98" height="38" viewBox="0 0 98 38"><defs><linearGradient id="mg824" x1="0" y1="0" x2="1" y2="1"><stop offset="0" stop-color="#fde9b0"/><stop offset="0.6" stop-color="#fadb8e"/><stop offset="1" stop-color="#f2c46a"/></linearGradient></defs><rect x="0.5" y="0.5" width="97" height="37" fill="url(#mg824)" stroke="#6b5a3a" stroke-width="1.5"/><path d="M8.8 19.0A117.6 117.6 0 0 1 89.2 19.0" stroke="#3a3020" stroke-width="2.2" fill="none"/><path d="M8.8 19.0L7.1 14.3" stroke="#3a3020" stroke-width="1.6"/><path d="M14.3 17.1L13.5 14.3" stroke="#3a3020" stroke-width="1.6"/><path d="M20.0 15.5L18.7 10.7" stroke="#3a3020" stroke-width="1.6"/><path d="M25.7 14.2L25.1 11.3" stroke="#3a3020" stroke-width="1.6"/><path d="M31.5 13.2L30.7 8.3" stroke="#3a3020" stroke-width="1.6"/><path d="M37.3 12.5L37.0 9.5" stroke="#3a3020" stroke-width="1.6"/><path d="M43.1 12.1L42.9 7.1" stroke="#3a3020" stroke-width="1.6"/><path d="M49.0 11.9L49.0 8.9" stroke="#3a3020" stroke-width="1.6"/><path d="M54.9 12.1L55.1 7.1" stroke="#3a3020" stroke-width="1.6"/><path d="M60.7 12.5L61.0 9.5" stroke="#3a3020" stroke-width="1.6"/><path d="M66.5 13.2L67.3 8.3" stroke="#3a3020" stroke-width="1.6"/><path d="M72.3 14.2L72.9 11.3" stroke="#3a3020" stroke-width="1.6"/><path d="M78.0 15.5L79.3 10.7" stroke="#3a3020" stroke-width="1.6"/><path d="M83.7 17.1L84.5 14.3" stroke="#3a3020" stroke-width="1.6"/><path d="M89.2 19.0L90.9 14.3" stroke="#3a3020" stroke-width="1.6"/><rect x="25" y="25" width="23" height="9" fill="#c8e86a" stroke="#8fb040" stroke-width="1"/><text x="36.5" y="32" font-size="8" font-family="Liberation Sans" font-weight="bold" text-anchor="middle" fill="#1a2a00">-76.0</text><rect x="51" y="25" width="22" height="9" fill="#c8e86a" stroke="#8fb040" stroke-width="1"/><text x="62.0" y="32" font-size="8" font-family="Liberation Sans" font-weight="bold" text-anchor="middle" fill="#1a2a00">14.0</text><path d="M38 3V38" stroke="#bbbbbb" stroke-width="1.6"/><path d="M45 3V38" stroke="#d02010" stroke-width="1.6"/></svg>
<svg class="a" style="left:884px;top:254px" width="49" height="37"><defs><linearGradient id="rb" x1="0" y1="0" x2="0" y2="1"><stop offset="0" stop-color="#b03040" stop-opacity="0.95"/><stop offset="0.08" stop-color="#e08090" stop-opacity="0.9"/><stop offset="0.17" stop-color="#a03040" stop-opacity="0.9"/><stop offset="0.2" stop-color="#604050" stop-opacity="0.25"/><stop offset="0.8" stop-color="#604050" stop-opacity="0.25"/><stop offset="0.83" stop-color="#b01828" stop-opacity="0.9"/><stop offset="1" stop-color="#a01020" stop-opacity="0.95"/></linearGradient></defs><rect width="49" height="37" fill="url(#rb)"/></svg>
<div class="a" style="left:803px;top:291px;width:211px;height:9px;background:linear-gradient(#7a7a7a,#4a4a4a 45%,#262626)"></div>
<div class="a" style="left:806px;top:291px;width:1px;height:4px;background:#bbbbbb;opacity:0.5"></div>
<div class="a" style="left:812px;top:291px;width:1px;height:2px;background:#bbbbbb;opacity:0.5"></div>
<div class="a" style="left:818px;top:291px;width:1px;height:4px;background:#bbbbbb;opacity:0.5"></div>
<div class="a" style="left:824px;top:291px;width:1px;height:2px;background:#bbbbbb;opacity:0.5"></div>
<div class="a" style="left:830px;top:291px;width:1px;height:4px;background:#bbbbbb;opacity:0.5"></div>
<div class="a" style="left:836px;top:291px;width:1px;height:2px;background:#bbbbbb;opacity:0.5"></div>
<div class="a" style="left:842px;top:291px;width:1px;height:4px;background:#bbbbbb;opacity:0.5"></div>
<div class="a" style="left:848px;top:291px;width:1px;height:2px;background:#bbbbbb;opacity:0.5"></div>
<div class="a" style="left:854px;top:291px;width:1px;height:4px;background:#bbbbbb;opacity:0.5"></div>
<div class="a" style="left:860px;top:291px;width:1px;height:2px;background:#bbbbbb;opacity:0.5"></div>
<div class="a" style="left:866px;top:291px;width:1px;height:4px;background:#bbbbbb;opacity:0.5"></div>
<div class="a" style="left:872px;top:291px;width:1px;height:2px;background:#bbbbbb;opacity:0.5"></div>
<div class="a" style="left:878px;top:291px;width:1px;height:4px;background:#bbbbbb;opacity:0.5"></div>
<div class="a" style="left:884px;top:291px;width:1px;height:2px;background:#bbbbbb;opacity:0.5"></div>
<div class="a" style="left:890px;top:291px;width:1px;height:4px;background:#bbbbbb;opacity:0.5"></div>
<div class="a" style="left:896px;top:291px;width:1px;height:2px;background:#bbbbbb;opacity:0.5"></div>
<div class="a" style="left:902px;top:291px;width:1px;height:4px;background:#bbbbbb;opacity:0.5"></div>
<div class="a" style="left:908px;top:291px;width:1px;height:2px;background:#bbbbbb;opacity:0.5"></div>
<div class="a" style="left:914px;top:291px;width:1px;height:4px;background:#bbbbbb;opacity:0.5"></div>
<div class="a" style="left:920px;top:291px;width:1px;height:2px;background:#bbbbbb;opacity:0.5"></div>
<div class="a" style="left:926px;top:291px;width:1px;height:4px;background:#bbbbbb;opacity:0.5"></div>
<div class="a" style="left:932px;top:291px;width:1px;height:2px;background:#bbbbbb;opacity:0.5"></div>
<div class="a" style="left:938px;top:291px;width:1px;height:4px;background:#bbbbbb;opacity:0.5"></div>
<div class="a" style="left:944px;top:291px;width:1px;height:2px;background:#bbbbbb;opacity:0.5"></div>
<div class="a" style="left:950px;top:291px;width:1px;height:4px;background:#bbbbbb;opacity:0.5"></div>
<div class="a" style="left:956px;top:291px;width:1px;height:2px;background:#bbbbbb;opacity:0.5"></div>
<div class="a" style="left:962px;top:291px;width:1px;height:4px;background:#bbbbbb;opacity:0.5"></div>
<div class="a" style="left:968px;top:291px;width:1px;height:2px;background:#bbbbbb;opacity:0.5"></div>
<div class="a" style="left:974px;top:291px;width:1px;height:4px;background:#bbbbbb;opacity:0.5"></div>
<div class="a" style="left:980px;top:291px;width:1px;height:2px;background:#bbbbbb;opacity:0.5"></div>
<div class="a" style="left:986px;top:291px;width:1px;height:4px;background:#bbbbbb;opacity:0.5"></div>
<div class="a" style="left:992px;top:291px;width:1px;height:2px;background:#bbbbbb;opacity:0.5"></div>
<div class="a" style="left:998px;top:291px;width:1px;height:4px;background:#bbbbbb;opacity:0.5"></div>
<div class="a" style="left:1004px;top:291px;width:1px;height:2px;background:#bbbbbb;opacity:0.5"></div>
<div class="a" style="left:1010px;top:291px;width:1px;height:4px;background:#bbbbbb;opacity:0.5"></div>
<div class="a" style="left:803px;top:300px;width:211px;height:7px;background:#000"></div>
<div class="t" style="left:815.00px;top:297px;font-size:9.5px;color:#f0f0f0;transform:scaleX(0.8958);transform-origin:0 0;">475.0</div>
<div class="t" style="left:874.00px;top:297px;font-size:9.5px;color:#f0f0f0;transform:scaleX(0.8913);transform-origin:0 0;">475.5</div>
<div class="t" style="left:931.50px;top:297px;font-size:9.5px;color:#f0f0f0;transform:scaleX(0.8958);transform-origin:0 0;">476.0</div>
<div class="t" style="left:990.80px;top:297px;font-size:9.5px;color:#f0f0f0;transform:scaleX(0.9043);transform-origin:0 0;">476.5</div>
<div class="a" style="left:799px;top:307px;width:219px;height:106px;background:#000"></div>
<svg class="a" style="left:802px;top:309px" width="213" height="100"><defs><filter id="pw802" x="0" y="0" width="100%" height="100%"><feTurbulence type="fractalNoise" baseFrequency="0.05 0.6" numOctaves="3" seed="33" result="a"/><feTurbulence type="fractalNoise" baseFrequency="0.02 0.05" numOctaves="1" seed="40" result="b"/><feComposite in="a" in2="b" operator="arithmetic" k1="0" k2="1.1" k3="0.45" k4="-0.28"/><feColorMatrix values="0 0 0 0 0.32  0 0 0 0 0.4  0 0 0 0 0.9  2.6 0 0 0 -0.69"/></filter></defs><rect width="213" height="100" fill="#0e1448"/><rect width="213" height="100" filter="url(#pw802)"/></svg>
<div class="a" style="left:852px;top:384px;width:110px;height:24px;background:rgba(15,15,20,0.85);border-radius:4px"></div>
<div class="t" style="left:856px;top:391px;font-size:11.5px;color:#f4f4f4;font-family:'Liberation Mono',monospace">2 : 474.200 kHz</div>
<div class="a" style="left:552px;top:413px;width:469px;height:4px;background:#f4f6f8"></div>
<div class="a" style="left:190px;top:184px;width:448px;height:359px;background:#f0f0f0"></div>
<div class="a" style="left:190.5px;top:185.1px;width:448px;height:27px;background:#fff"></div>
<div class="a" style="left:190.5px;top:212.1px;width:448px;height:17px;background:linear-gradient(#fff,#fdfdfd 55%,#f1f1f1)"></div>
<svg class="a" style="left:196.5px;top:191.1px" width="14" height="14" viewBox="0 0 14 14"><circle cx="7" cy="7" r="6.8" fill="#1c3cc8"/><ellipse cx="8" cy="3.5" rx="4" ry="2.5" fill="#2a8aa0" opacity="0.9"/><ellipse cx="5.5" cy="6" rx="3" ry="3.4" fill="#28d848"/><ellipse cx="9.8" cy="7.8" rx="2.2" ry="2.4" fill="#6a6af0" opacity="0.8"/><ellipse cx="8.5" cy="12" rx="2.5" ry="1.3" fill="#38b848" opacity="0.8"/><circle cx="7" cy="7" r="6.6" fill="none" stroke="#1020a0" stroke-width="0.8"/></svg>
<div class="t" style="left:214.50px;top:194px;font-size:11.5px;color:#000;transform:scaleX(0.8452);transform-origin:0 0;">WSJT-X</div>
<div class="t" style="left:251.48px;top:194px;font-size:11.5px;color:#000;transform:scaleX(1.0188);transform-origin:0 0;">- r2</div>
<div class="t" style="left:278.80px;top:194px;font-size:11.5px;color:#000;transform:scaleX(0.8516);transform-origin:0 0;">v2.6.1</div>
<div class="t" style="left:314.85px;top:194px;font-size:11.5px;color:#000;transform:scaleX(0.8544);transform-origin:0 0;">by K1JT et al.</div>
<div class="t" style="left:194.65px;top:214px;font-size:11.0px;color:#111;transform:scaleX(0.8462);transform-origin:0 0;">Файл</div>
<div class="t" style="left:226.11px;top:214px;font-size:11.0px;color:#111;transform:scaleX(0.8903);transform-origin:0 0;">Конфигурация</div>
<div class="t" style="left:299.64px;top:214px;font-size:11.0px;color:#111;transform:scaleX(0.8644);transform-origin:0 0;">Показывать</div>
<div class="t" style="left:360.13px;top:214px;font-size:11.0px;color:#111;transform:scaleX(0.8661);transform-origin:0 0;">Модуляция</div>
<div class="t" style="left:419.50px;top:214px;font-size:11.0px;color:#111;transform:scaleX(0.8333);transform-origin:0 0;">Декод.</div>
<div class="t" style="left:457.20px;top:214px;font-size:11.0px;color:#111;transform:scaleX(0.8981);transform-origin:0 0;">Сохранить</div>
<div class="t" style="left:513.62px;top:214px;font-size:11.0px;color:#111;transform:scaleX(0.8806);transform-origin:0 0;">Инструменты</div>
<div class="t" style="left:581.94px;top:214px;font-size:11.0px;color:#111;transform:scaleX(0.8610);transform-origin:0 0;">Помощь</div>
<div class="a" style="left:190px;top:184px;width:1px;height:359px;background:#7a7a7a"></div>
<div class="a" style="left:637px;top:184px;width:1px;height:359px;background:#555"></div>
<div class="a" style="left:190px;top:184px;width:448px;height:1px;background:#7a7a7a"></div>
<div class="a" style="left:529px;top:197px;width:11px;height:1px;background:#222"></div>
<div class="a" style="left:569px;top:193px;width:11px;height:10px;border:1px solid #222"></div>
<svg class="a" style="left:611px;top:192px" width="12" height="12"><path d="M1 1L11 11M11 1L1 11" stroke="#222" stroke-width="1.1"/></svg>
<div class="a" style="left:197px;top:233px;width:435px;height:11px;background:#a9a9a9"></div>
<div class="t" style="left:199.36px;top:235px;font-size:11.0px;color:#262626;font-family:'Liberation Mono';transform:scaleX(1.1389);transform-origin:0 0;">UTC</div>
<div class="t" style="left:241.38px;top:235px;font-size:11.0px;color:#262626;font-family:'Liberation Mono';transform:scaleX(1.2167);transform-origin:0 0;">dB</div>
<div class="t" style="left:278.78px;top:235px;font-size:11.0px;color:#262626;font-family:'Liberation Mono';transform:scaleX(1.0250);transform-origin:0 0;">DT</div>
<div class="t" style="left:300.32px;top:235px;font-size:11.0px;color:#262626;font-family:'Liberation Mono';transform:scaleX(1.0800);transform-origin:0 0;">Freq</div>
<div class="t" style="left:355.90px;top:235px;font-size:11.0px;color:#262626;font-family:'Liberation Mono';transform:scaleX(1.1034);transform-origin:0 0;">Сообщение</div>
<div class="a" style="left:197px;top:247px;width:436px;height:64px;background:#fff;border:1px solid #adb8c4;border-top:1px solid #8cc4ec"></div>
<div class="a" style="left:620px;top:248px;width:12px;height:62px;background:#f3f3f3"></div>
<svg class="a" style="left:622px;top:255px" width="8" height="5"><path d="M1 4.5L4 1.5L7 4.5" stroke="#a8a8a8" fill="none" stroke-width="1.2"/></svg>
<svg class="a" style="left:622px;top:301px" width="8" height="5"><path d="M1 0.5L4 3.5L7 0.5" stroke="#a8a8a8" fill="none" stroke-width="1.2"/></svg>
<div class="t" style="left:199.45px;top:252px;font-size:11.5px;color:#333;font-family:'Liberation Mono';transform:scaleX(1.0500);transform-origin:0 0;">1930</div>
<div class="t" style="left:234.57px;top:252px;font-size:11.5px;color:#333;font-family:'Liberation Mono';transform:scaleX(1.0667);transform-origin:0 0;">-38</div>
<div class="t" style="left:271.24px;top:252px;font-size:11.5px;color:#333;font-family:'Liberation Mono';transform:scaleX(1.0579);transform-origin:0 0;">0.0</div>
<div class="t" style="left:300.71px;top:252px;font-size:11.5px;color:#333;font-family:'Liberation Mono';transform:scaleX(0.9885);transform-origin:0 0;">1534</div>
<div class="t" style="left:356.87px;top:252px;font-size:11.5px;color:#333;font-family:'Liberation Mono';transform:scaleX(1.0275);transform-origin:0 0;">RN3AUS</div>
<div class="t" style="left:406.95px;top:252px;font-size:11.5px;color:#333;font-family:'Liberation Mono';transform:scaleX(1.0538);transform-origin:0 0;">KO85</div>
<div class="t" style="left:442.28px;top:252px;font-size:11.5px;color:#333;font-family:'Liberation Mono';transform:scaleX(1.2200);transform-origin:0 0;">7</div>
<div class="a" style="left:339px;top:256px;width:2px;height:2px;background:#777"></div>
<div class="a" style="left:197px;top:316px;width:48px;height:19px;background:#e1e1e1;border:1px solid #cfcfcf"></div>
<div class="t" style="left:210.00px;top:322px;font-size:9.5px;color:#222;transform:scaleX(1.0476);transform-origin:0 0;">Стоп</div>
<div class="a" style="left:250px;top:318px;width:50px;height:16px;background:#00f000;border:1px solid #1a7a1a;border-radius:3px"></div>
<div class="t" style="left:253.66px;top:322px;font-size:9.5px;color:#333;transform:scaleX(1.0395);transform-origin:0 0;">Монитор</div>
<div class="a" style="left:305px;top:316px;width:48px;height:19px;background:#e1e1e1;border:1px solid #cfcfcf"></div>
<div class="t" style="left:310.00px;top:322px;font-size:9.5px;color:#222;transform:scaleX(1.0010);transform-origin:0 0;">Очистка</div>
<div class="a" style="left:357px;top:316px;width:48px;height:19px;background:#e1e1e1;border:1px solid #cfcfcf"></div>
<div class="t" style="left:365.80px;top:322px;font-size:9.5px;color:#222;transform:scaleX(1.0357);transform-origin:0 0;">Декод.</div>
<div class="a" style="left:410px;top:316px;width:50px;height:19px;background:#e1e1e1;border:1px solid #cfcfcf"></div>
<div class="a" style="left:411px;top:317px;width:48px;height:18px;overflow:hidden"><div class="t" style="left:-5.12px;top:5px;font-size:9.5px;color:#222;transform:scaleX(1.1250);transform-origin:0 0;">Разреш. Тх</div>
</div>
<div class="a" style="left:464px;top:316px;width:49px;height:19px;background:#e1e1e1;border:1px solid #cfcfcf"></div>
<div class="t" style="left:470.10px;top:322px;font-size:9.5px;color:#222;transform:scaleX(0.9861);transform-origin:0 0;">Стоп TX</div>
<div class="a" style="left:517px;top:316px;width:66px;height:19px;background:#e1e1e1;border:1px solid #cfcfcf"></div>
<div class="t" style="left:525.30px;top:322px;font-size:9.5px;color:#222;transform:scaleX(1.0010);transform-origin:0 0;">Настройка</div>
<div class="a" style="left:587px;top:319px;width:12px;height:12px;background:#fff;border:1px solid #333"></div>
<svg class="a" style="left:588px;top:320px" width="10" height="10"><path d="M1.2 5L3.8 7.8L8.8 1.5" stroke="#222" fill="none" stroke-width="1.1"/></svg>
<div class="t" style="left:602.80px;top:322px;font-size:9.5px;color:#111;transform:scaleX(1.0010);transform-origin:0 0;">Меню</div>
<div class="t" style="left:601.70px;top:349px;font-size:9.5px;color:#111;transform:scaleX(0.9963);transform-origin:0 0;">Мощн.</div>
<div class="a" style="left:197px;top:345px;width:70px;height:17px;background:#fff;border:1px solid #adadad"></div>
<svg class="a" style="left:254px;top:351.5px" width="9" height="5"><path d="M1 0.8L4.5 4L8 0.8" stroke="#606060" fill="none" stroke-width="1"/></svg>
<div class="t" style="left:199.90px;top:349px;font-size:9.5px;color:#222;transform:scaleX(1.0103);transform-origin:0 0;">2190m</div>
<div class="a" style="left:270.2px;top:347.4px;width:13.2px;height:13.2px;border-radius:50%;background:#19e619"></div>
<div class="a" style="left:287px;top:340px;width:111px;height:29px;background:#000"></div>
<div class="t" style="left:300.07px;top:345px;font-size:20.0px;color:#f0f06a;transform:scaleX(0.9330);transform-origin:0 0;">0,136 000</div>
<div class="a" style="left:197px;top:372px;width:58px;height:15px;background:#fff;border:1px solid #adadad"></div>
<div class="a" style="left:244px;top:373px;width:11px;height:13px;background:linear-gradient(90deg,#f4f4f4,#dedede)"></div>
<svg class="a" style="left:245px;top:373.5px" width="9" height="12" viewBox="0 0 9 12"><path d="M0.5 5L4.5 0.8L8.5 5z M0.5 7L4.5 11.2L8.5 7z" fill="#1a1a1a"/></svg>
<div class="t" style="left:199.46px;top:377px;font-size:10.0px;color:#222;transform:scaleX(0.9385);transform-origin:0 0;">NB</div>
<div class="t" style="left:218.90px;top:377px;font-size:10.0px;color:#222;transform:scaleX(1.0800);transform-origin:0 0;">0</div>
<div class="t" style="left:230.60px;top:377px;font-size:10.0px;color:#222;transform:scaleX(0.9778);transform-origin:0 0;">%</div>
<div class="a" style="left:197px;top:391px;width:44px;height:131px;background:#f0f0f0;border:1px solid #dadada"></div>
<div class="a" style="left:212px;top:405px;width:1px;height:91px;background:#3a3a3a"></div>
<div class="a" style="left:212px;top:405px;width:4px;height:1px;background:#3a3a3a"></div>
<div class="a" style="left:213px;top:415px;width:3px;height:1px;background:#3a3a3a"></div>
<div class="a" style="left:213px;top:425px;width:3px;height:1px;background:#3a3a3a"></div>
<div class="t" style="left:215.00px;top:411px;font-size:9.0px;color:#222;transform:scaleX(1.0800);transform-origin:0 0;">80</div>
<div class="a" style="left:213px;top:435px;width:3px;height:1px;background:#3a3a3a"></div>
<div class="a" style="left:213px;top:445px;width:3px;height:1px;background:#3a3a3a"></div>
<div class="t" style="left:215.00px;top:431px;font-size:9.0px;color:#222;transform:scaleX(1.0800);transform-origin:0 0;">60</div>
<div class="a" style="left:213px;top:456px;width:3px;height:1px;background:#3a3a3a"></div>
<div class="a" style="left:213px;top:466px;width:3px;height:1px;background:#3a3a3a"></div>
<div class="t" style="left:215.00px;top:452px;font-size:9.0px;color:#222;transform:scaleX(1.0800);transform-origin:0 0;">40</div>
<div class="a" style="left:213px;top:476px;width:3px;height:1px;background:#3a3a3a"></div>
<div class="a" style="left:213px;top:486px;width:3px;height:1px;background:#3a3a3a"></div>
<div class="t" style="left:215.00px;top:472px;font-size:9.0px;color:#222;transform:scaleX(1.0800);transform-origin:0 0;">20</div>
<div class="a" style="left:213px;top:496px;width:3px;height:1px;background:#3a3a3a"></div>
<div class="t" style="left:215.00px;top:492px;font-size:9.0px;color:#222;transform:scaleX(1.1000);transform-origin:0 0;">0</div>
<div class="a" style="left:206px;top:448px;width:6px;height:48px;background:#5c9e5c"></div>
<svg class="a" style="left:205px;top:445px" width="8" height="5"><path d="M0 0L8 2.5L0 5z" fill="#111"/></svg>
<div class="t" style="left:205.30px;top:504px;font-size:10.0px;color:#222;transform:scaleX(0.9115);transform-origin:0 0;">46 dB</div>
<div class="a" style="left:260px;top:374px;width:22px;height:19px;background:#e0e0e0;border:1px solid #d2d2d2"></div>
<div class="a" style="left:260px;top:399px;width:22px;height:19px;background:#e0e0e0;border:1px solid #d2d2d2"></div>
<div class="a" style="left:260px;top:424px;width:22px;height:19px;background:#e0e0e0;border:1px solid #d2d2d2"></div>
<div class="a" style="left:260px;top:449px;width:22px;height:19px;background:#e0e0e0;border:1px solid #d2d2d2"></div>
<div class="a" style="left:260px;top:474px;width:22px;height:19px;background:#e0e0e0;border:1px solid #d2d2d2"></div>
<div class="a" style="left:260px;top:499px;width:22px;height:19px;background:#e0e0e0;border:1px solid #d2d2d2"></div>
<div class="t" style="left:266.54px;top:379px;font-size:9.5px;color:#111;transform:scaleX(1.2600);transform-origin:0 0;">H</div>
<div class="t" style="left:261.27px;top:404px;font-size:9.5px;color:#111;transform:scaleX(1.1267);transform-origin:0 0;">FT8</div>
<div class="t" style="left:261.27px;top:429px;font-size:9.5px;color:#111;transform:scaleX(1.1267);transform-origin:0 0;">FT4</div>
<div class="t" style="left:260.47px;top:454px;font-size:9.5px;color:#111;transform:scaleX(1.0263);transform-origin:0 0;">MSK</div>
<div class="t" style="left:262.00px;top:479px;font-size:9.5px;color:#111;transform:scaleX(1.0010);transform-origin:0 0;">Q65</div>
<div class="t" style="left:259.74px;top:504px;font-size:9.5px;color:#111;transform:scaleX(1.0600);transform-origin:0 0;">JT65</div>
<div class="a" style="left:287px;top:468px;width:111px;height:53px;background:#000"></div>
<div class="t" style="left:290.79px;top:474px;font-size:20.5px;color:#f0f06a;transform:scaleX(0.9125);transform-origin:0 0;">2025 ноя 22</div>
<div class="t" style="left:304.56px;top:497px;font-size:20.5px;color:#f0f06a;transform:scaleX(0.9436);transform-origin:0 0;">05:04:22</div>
<div class="a" style="left:408px;top:376px;width:75px;height:15px;background:#fff;border:1px solid #adadad"></div>
<div class="a" style="left:471px;top:377px;width:11px;height:13px;background:linear-gradient(90deg,#f4f4f4,#dedede)"></div>
<svg class="a" style="left:472px;top:377.5px" width="9" height="12" viewBox="0 0 9 12"><path d="M0.5 5L4.5 0.8L8.5 5z M0.5 7L4.5 11.2L8.5 7z" fill="#1a1a1a"/></svg>
<div class="t" style="left:413.30px;top:379px;font-size:10.5px;color:#222;transform:scaleX(0.9000);transform-origin:0 0;">Tx</div>
<div class="t" style="left:429.16px;top:379px;font-size:10.5px;color:#222;transform:scaleX(0.9364);transform-origin:0 0;">1500</div>
<div class="t" style="left:455.55px;top:379px;font-size:10.5px;color:#222;transform:scaleX(0.9455);transform-origin:0 0;">Гц</div>
<div class="a" style="left:408px;top:395px;width:75px;height:15px;background:#fff;border:1px solid #adadad"></div>
<div class="a" style="left:471px;top:396px;width:11px;height:13px;background:linear-gradient(90deg,#f4f4f4,#dedede)"></div>
<svg class="a" style="left:472px;top:396.5px" width="9" height="12" viewBox="0 0 9 12"><path d="M0.5 5L4.5 0.8L8.5 5z M0.5 7L4.5 11.2L8.5 7z" fill="#1a1a1a"/></svg>
<div class="t" style="left:411.76px;top:398px;font-size:10.5px;color:#222;transform:scaleX(0.9364);transform-origin:0 0;">Rx</div>
<div class="t" style="left:429.16px;top:398px;font-size:10.5px;color:#222;transform:scaleX(0.9364);transform-origin:0 0;">1500</div>
<div class="t" style="left:455.55px;top:398px;font-size:10.5px;color:#222;transform:scaleX(0.9455);transform-origin:0 0;">Гц</div>
<div class="a" style="left:408px;top:414px;width:75px;height:15px;background:#fff;border:1px solid #adadad"></div>
<div class="a" style="left:471px;top:415px;width:11px;height:13px;background:linear-gradient(90deg,#f4f4f4,#dedede)"></div>
<svg class="a" style="left:472px;top:415.5px" width="9" height="12" viewBox="0 0 9 12"><path d="M0.5 5L4.5 0.8L8.5 5z M0.5 7L4.5 11.2L8.5 7z" fill="#1a1a1a"/></svg>
<div class="t" style="left:409.00px;top:417px;font-size:10.5px;color:#222;transform:scaleX(0.9952);transform-origin:0 0;">F Tol</div>
<div class="t" style="left:437.07px;top:417px;font-size:10.5px;color:#222;transform:scaleX(0.9312);transform-origin:0 0;">100</div>
<div class="t" style="left:458.10px;top:417px;font-size:10.5px;color:#222;transform:scaleX(0.9000);transform-origin:0 0;">Гц</div>
<div class="a" style="left:408px;top:433px;width:75px;height:14px;background:#fff;border:1px solid #adadad"></div>
<svg class="a" style="left:472px;top:438.0px" width="9" height="5"><path d="M1 0.8L4.5 4L8 0.8" stroke="#606060" fill="none" stroke-width="1"/></svg>
<div class="t" style="left:413.90px;top:436px;font-size:9.5px;color:#222;transform:scaleX(0.9820);transform-origin:0 0;">Случайный</div>
<div class="a" style="left:408px;top:451px;width:75px;height:15px;background:#fff;border:1px solid #adadad"></div>
<div class="a" style="left:471px;top:452px;width:11px;height:13px;background:linear-gradient(90deg,#f4f4f4,#dedede)"></div>
<svg class="a" style="left:472px;top:452.5px" width="9" height="12" viewBox="0 0 9 12"><path d="M0.5 5L4.5 0.8L8.5 5z M0.5 7L4.5 11.2L8.5 7z" fill="#1a1a1a"/></svg>
<div class="t" style="left:411.80px;top:454px;font-size:9.5px;color:#222;transform:scaleX(1.0222);transform-origin:0 0;">Tx Pct 20&nbsp;&nbsp;%</div>
<div class="a" style="left:408px;top:470px;width:75px;height:15px;background:#fff;border:1px solid #adadad"></div>
<div class="a" style="left:471px;top:471px;width:11px;height:13px;background:linear-gradient(90deg,#f4f4f4,#dedede)"></div>
<svg class="a" style="left:472px;top:471.5px" width="9" height="12" viewBox="0 0 9 12"><path d="M0.5 5L4.5 0.8L8.5 5z M0.5 7L4.5 11.2L8.5 7z" fill="#1a1a1a"/></svg>
<div class="t" style="left:418.10px;top:474px;font-size:10.5px;color:#222;transform:scaleX(0.9125);transform-origin:0 0;">T/R&nbsp;&nbsp;900 c</div>
<div class="a" style="left:500px;top:385px;width:92px;height:14px;background:#ffff00"></div>
<div class="a" style="left:488px;top:385px;width:12px;height:12px;background:#fff;border:1px solid #333"></div>
<div class="t" style="left:502.27px;top:387px;font-size:9.5px;color:#222;transform:scaleX(1.0298);transform-origin:0 0;">Послать спот</div>
<div class="a" style="left:488px;top:403px;width:12px;height:12px;background:#fff;border:1px solid #333"></div>
<svg class="a" style="left:489px;top:404px" width="10" height="10"><path d="M1.2 5L3.8 7.8L8.8 1.5" stroke="#222" fill="none" stroke-width="1.1"/></svg>
<div class="t" style="left:502.33px;top:406px;font-size:10.0px;color:#222;transform:scaleX(0.9674);transform-origin:0 0;">Выбор сообщения т</div>
<div class="a" style="left:488px;top:420px;width:12px;height:12px;background:#fff;border:1px solid #333"></div>
<div class="t" style="left:502.37px;top:422px;font-size:10.5px;color:#222;transform:scaleX(0.9274);transform-origin:0 0;">Нет своих декод. вь</div>
<div class="a" style="left:488px;top:437px;width:65px;height:20px;background:#e1e1e1;border:1px solid #cfcfcf"></div>
<div class="t" style="left:502.40px;top:443px;font-size:10.5px;color:#222;transform:scaleX(0.9179);transform-origin:0 0;">Тх след.</div>
<div class="a" style="left:488px;top:461px;width:94px;height:15px;background:#e6e6e6;border:1px solid #adadad"></div>
<svg class="a" style="left:570px;top:466.5px" width="9" height="5"><path d="M1 0.8L4.5 4L8 0.8" stroke="#606060" fill="none" stroke-width="1"/></svg>
<div class="t" style="left:489.07px;top:463px;font-size:9.5px;color:#222;transform:scaleX(1.0278);transform-origin:0 0;">37 dBm&nbsp;&nbsp;5 W</div>
<div class="a" style="left:608px;top:380px;width:3px;height:141px;background:#e7e7e7;border-left:1px solid #c9c9c9;border-right:1px solid #fafafa"></div>
<div class="a" style="left:603px;top:375px;width:12px;height:5px;background:#1e7ad0;border-radius:1px"></div>
<svg class="a" style="left:614px;top:375px" width="4" height="5"><path d="M0 0L4 2.5L0 5z" fill="#1e7ad0"/></svg>
<div class="a" style="left:616px;top:393px;width:3px;height:1px;background:#a8a8a8"></div>
<div class="a" style="left:616px;top:408px;width:3px;height:1px;background:#a8a8a8"></div>
<div class="a" style="left:616px;top:423px;width:3px;height:1px;background:#a8a8a8"></div>
<div class="a" style="left:616px;top:438px;width:3px;height:1px;background:#a8a8a8"></div>
<div class="a" style="left:616px;top:453px;width:3px;height:1px;background:#a8a8a8"></div>
<div class="a" style="left:616px;top:468px;width:3px;height:1px;background:#a8a8a8"></div>
<div class="a" style="left:616px;top:483px;width:3px;height:1px;background:#a8a8a8"></div>
<div class="a" style="left:616px;top:498px;width:3px;height:1px;background:#a8a8a8"></div>
<div class="a" style="left:616px;top:513px;width:3px;height:1px;background:#a8a8a8"></div>
<div class="a" style="left:192px;top:530px;width:60px;height:11px;background:#00f000"></div>
<div class="t" style="left:205.90px;top:530px;font-size:9.5px;color:#333;transform:scaleX(1.0036);transform-origin:0 0;">Прием</div>
<div class="a" style="left:255px;top:530px;width:48px;height:11px;background:#6fa8ee"></div>
<div class="t" style="left:262.76px;top:530px;font-size:9.5px;color:#223355;transform:scaleX(0.9419);transform-origin:0 0;">FST4W</div>
<div class="a" style="left:306px;top:529px;width:90px;height:13px;border:1px solid #d6d6d6;background:#ececec"></div>
<div class="a" style="left:399px;top:529px;width:18px;height:13px;border:1px solid #d6d6d6"></div>
<div class="t" style="left:404.50px;top:530px;font-size:9.5px;color:#111;transform:scaleX(1.0010);transform-origin:0 0;">0</div>
<div class="a" style="left:527px;top:530px;width:58px;height:11px;background:#dcdcdc"></div>
<div class="a" style="left:527px;top:530px;width:16px;height:11px;background:#10b030"></div>
<div class="t" style="left:586.30px;top:531px;font-size:10.5px;color:#222;transform:scaleX(0.9079);transform-origin:0 0;">262/900</div>
<div class="a" style="left:190px;top:543px;width:448px;height:2px;background:#f0f0f0"></div>
<div class="a" style="left:425px;top:543px;width:143px;height:2px;background:#202020"></div>
</div></body></html>
